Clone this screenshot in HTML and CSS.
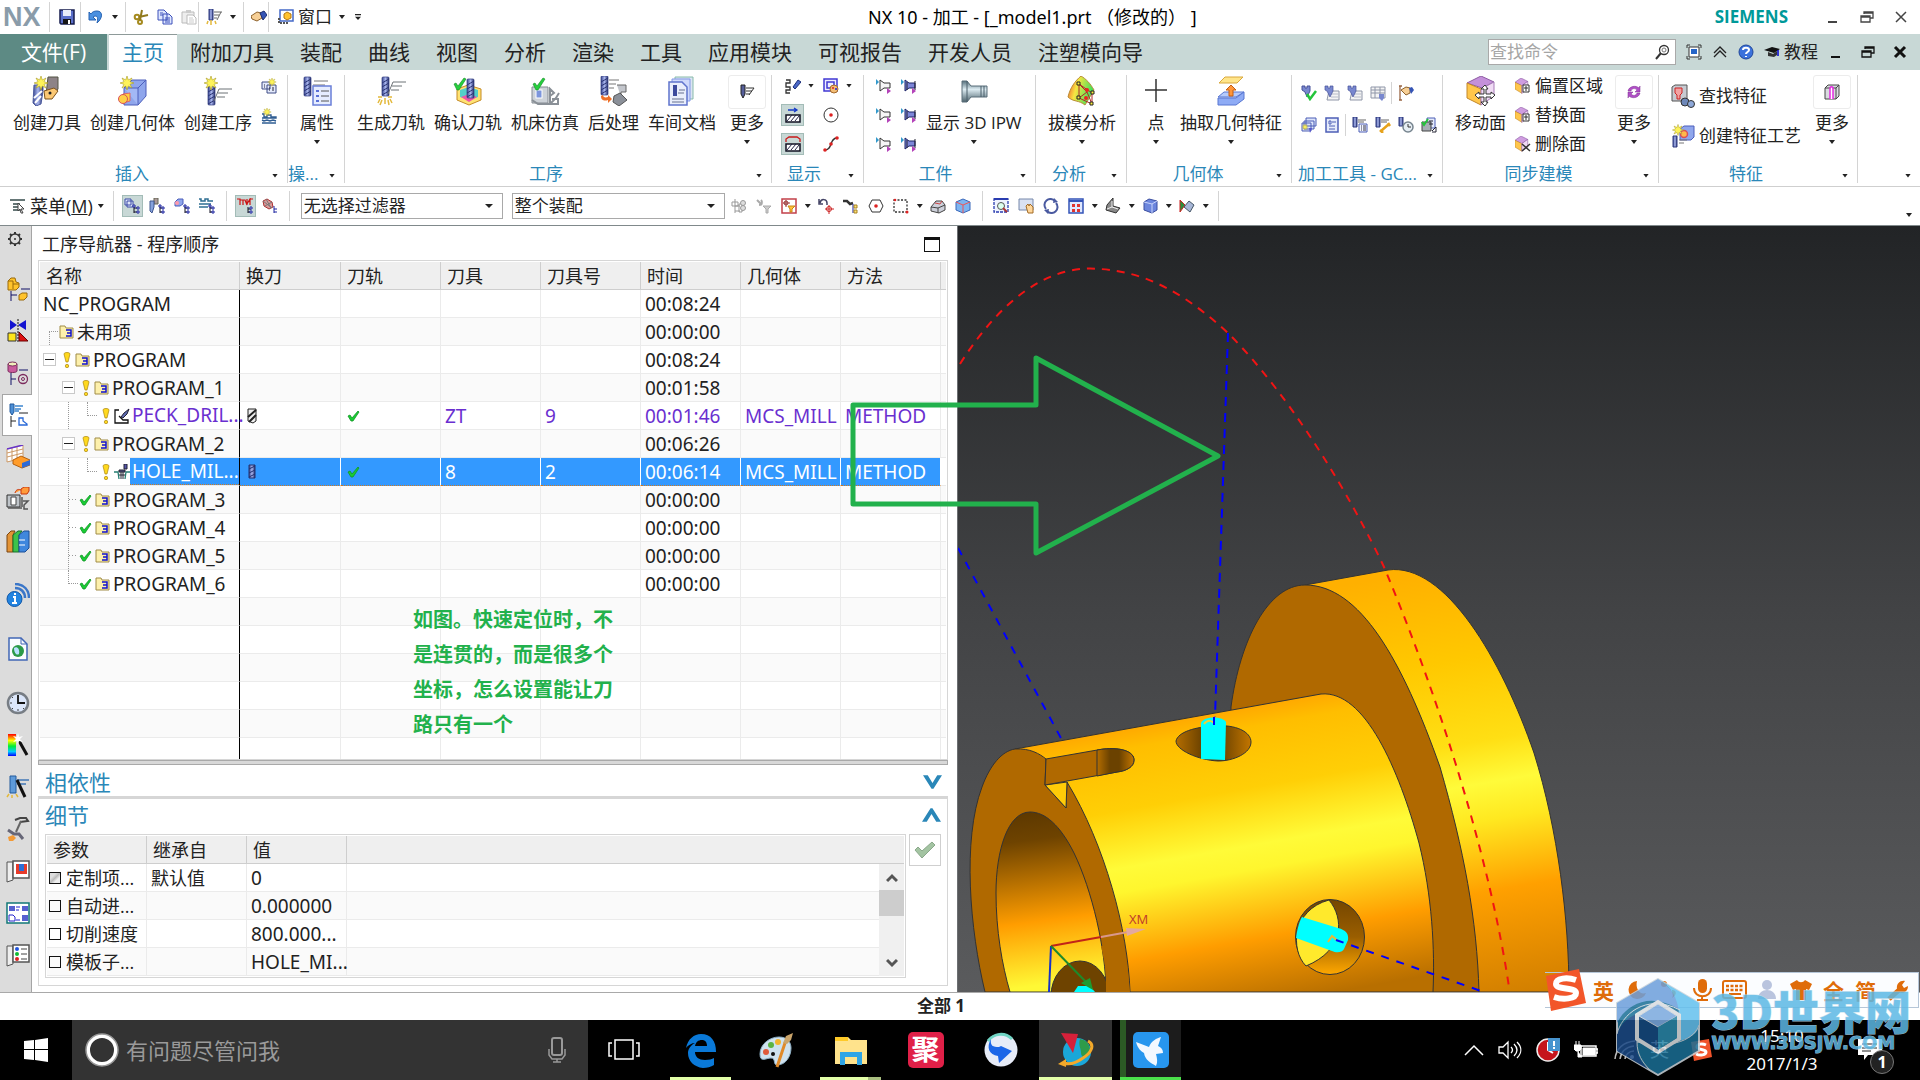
FILE: index.html
```html
<!DOCTYPE html>
<html lang="zh-CN">
<head>
    <meta charset="UTF-8">
    <meta name="viewport" content="width=device-width, initial-scale=1.0">
    <title>NX 10 - 加工</title>
    <link rel="stylesheet" href="styles.css">
</head>
<body>
    <!-- icon sprites -->
    <svg class="sprites" aria-hidden="true">
        <defs>
            <linearGradient id="gMill"><stop offset="0" stop-color="#3a478f"/><stop offset=".5" stop-color="#a9b6ee"/><stop offset="1" stop-color="#27306e"/></linearGradient>
            <linearGradient id="gSteel" x2="0" y2="1"><stop offset="0" stop-color="#56717d"/><stop offset=".4" stop-color="#dcebf1"/><stop offset="1" stop-color="#4c626c"/></linearGradient>
            <linearGradient id="gRain" x2="1" y2=".3"><stop offset="0" stop-color="#f0442c"/><stop offset=".4" stop-color="#f7e642"/><stop offset="1" stop-color="#3fe05a"/></linearGradient>
            <linearGradient id="gHue" x2="0" y2="1"><stop offset="0" stop-color="#f00"/><stop offset=".3" stop-color="#ff0"/><stop offset=".55" stop-color="#0e3"/><stop offset=".8" stop-color="#0cf"/><stop offset="1" stop-color="#00f"/></linearGradient>
            <g id="mill"><rect x="1" y="0" width="7" height="19" rx="1" fill="url(#gMill)" stroke="#2e3a80" stroke-width=".7"/><path d="M1 6l7-4M1 10l7-4M1 14l7-4M1 18l7-4" stroke="#2a3474"/></g>
            <path id="star" d="M0-7l1.300 4L5-5 3-1.300 7 0 3 1.300 5 5 1.300 3 0 7-1.300 3-5 5-3 1.300-7 0-3-1.300-5-5-1.300-3z" fill="#fdf35a" stroke="#a99a26" stroke-width=".6"/>
            <path id="tick" d="M0 4l2-1 2 3 6-8 2 1-7 11-2 0z" fill="#25cf3c" stroke="#128a25" stroke-width=".6"/>
            <path id="lines" d="M0 1h13M-1 5H9M-2 9H6M0 1l-5 12" stroke="#6d7276" fill="none"/>
            <g id="pcube"><path d="M0 5l7-5 8 4-7 5z" fill="#cf9de0" stroke="#8d5ba3" stroke-width=".7"/><path d="M0 5l8 4v9l-8-5z" fill="#ffc64b" stroke="#c2872a" stroke-width=".7"/><path d="M8 9l7-5v9l-7 5z" fill="#f0d9f5" stroke="#8d5ba3" stroke-width=".7"/></g>
        </defs>
        <symbol id="b-tool" viewBox="0 0 30 30"><path d="M16 1h10v12l-6 8-6-2z" fill="#8d8387" stroke="#554"/><path d="M12 15l10-3 4 3-6 8h-7z" fill="#fbc874" stroke="#7b521d"/><circle cx="18" cy="17" r="1.500" fill="#222"/><path d="M2 9h9v6l-2 13-5 2-3-3z" fill="url(#gMill)" stroke="#4c5b9d"/><path d="M2 22l8-7M3 27l6-7" stroke="#fff" stroke-width="2"/><use href="#star" x="9" y="7"/></symbol>
        <symbol id="b-geom" viewBox="0 0 30 30"><path d="M6 12l8-8h14v16l-8 9H6z" fill="#8fa6ec" stroke="#4c5fbb"/><path d="M6 12h14v17M20 12l8-8" fill="#a3b8f5" stroke="#4c5fbb"/><path d="M5 18l7-1v8l-7 2z" fill="#ffce3c" stroke="#d66"/><circle cx="5" cy="23" r="4.500" fill="#ffcf48" stroke="#d8505a"/><use href="#star" x="9" y="7"/></symbol>
        <symbol id="b-op" viewBox="0 0 30 30"><use href="#mill" x="4" y="10"/><use href="#lines" x="16" y="12"/><use href="#star" x="8" y="7"/></symbol>
        <symbol id="b-prop" viewBox="0 0 30 30"><use href="#mill" x="1" y="1"/><path d="M12 5h14M11 9h12" stroke="#777"/><rect x="11" y="10" width="18" height="19" fill="#e6edff" stroke="#6a7fd8" stroke-width="1.500"/><path d="M14 14h3v2h-3zM14 19h3v2h-3zM14 24h3v2h-3z" fill="#5a70d6"/><path d="M19 15h8M19 20h8M19 25h8" stroke="#555"/></symbol>
        <symbol id="b-gen" viewBox="0 0 30 30"><use href="#mill" x="5" y="1"/><use href="#lines" x="17" y="5"/><path d="M9 22v6M4 23l-2 4M14 23l2 4M2 21h4M12 21h4M6 24l-2 5M12 24l1 5" stroke="#e3b93c" stroke-width="1.500"/></symbol>
        <symbol id="b-verify" viewBox="0 0 30 30"><path d="M4 13l11-4 13 4v11l-12 5-12-5z" fill="#ffe373" stroke="#c58b26"/><path d="M7 14l9-3 9 3v7l-9 3-9-3z" fill="#53d0c9"/><path d="M8 21l8 5 8-5-8-3z" fill="#ee55a8"/><use href="#mill" x="13" y="3"/><use href="#tick" x="1" y="4"/></symbol>
        <symbol id="b-sim" viewBox="0 0 30 30"><path d="M2 11h16v16H2z" fill="#cdd2d8" stroke="#848b92"/><rect x="6" y="14" width="6" height="8" fill="#7c95dc" stroke="#fff"/><path d="M2 24l6 4h12V13l4 4-4 3M21 27l5-5 3-5M22 23h6v5h-8" fill="none" stroke="#8a9097" stroke-width="2"/><use href="#tick" x="3" y="4"/></symbol>
        <symbol id="b-post" viewBox="0 0 30 30"><use href="#mill" x="1" y="0"/><path d="M10 4h10M10 8h7M10 12h5" stroke="#777"/><path d="M18 9h9v7h-5v5" fill="#c3c6cc" stroke="#666"/><path d="M15 20l6-3 7 7-8 6-6-4z" fill="#8b9099" stroke="#555"/><path d="M2 20c0 5 4 5 7 4v3l4-4-4-4v2c-3 1-5 0-5-2z" fill="#ef7128"/></symbol>
        <symbol id="b-doc" viewBox="0 0 30 30"><path d="M8 1h18v22H8z" fill="#dbe4f3" stroke="#8ba"/><path d="M5 3h18v22H5z" fill="#cfd9fb" stroke="#8398e6"/><path d="M2 6h13l5 5v18H2z" fill="#e9eefb" stroke="#5f74cd" stroke-width="1.500"/><path d="M8 9v11" stroke="#3c4a9c" stroke-width="4"/><path d="M12 14h6M11 17h6M5 23h12M5 26h12" stroke="#67708f"/></symbol>
        <symbol id="b-ipw" viewBox="0 0 30 30"><path d="M3 5h5l4 5h16v11H12l-4 5H3z" fill="url(#gSteel)" stroke="#5b6f7a"/><path d="M22 10v11M25 10v11M8 5v21" stroke="#4b5f6a"/></symbol>
        <symbol id="b-draft" viewBox="0 0 30 30"><path d="M14 0c5 3 9 7 13 14l-9 15C12 24 6 26 1 21 3 12 8 5 14 0z" fill="url(#gRain)" stroke="#ba8d36"/><path d="M12 8v14l13 6V17zM12 8l8 8-8 6M20 16l5 12" fill="none" stroke="#b12828"/><path d="M10 6h3v3h-3zM10 20h3v3h-3zM24 15h3v3h-3zM23 26h3v3h-3z" fill="#ffee3a" stroke="#222"/><circle cx="20" cy="14" r="2" fill="#e22"/><circle cx="19" cy="22" r="2" fill="#e22"/></symbol>
        <symbol id="b-point" viewBox="0 0 30 30"><path d="M15 3v23M4 14h22" stroke="#333" stroke-width="1.500"/></symbol>
        <symbol id="b-extract" viewBox="0 0 30 30"><path d="M3 7l6-6h18l-6 6z" fill="#ffe58a" stroke="#d9a83d"/><path d="M2 21l6-5h20l-8 5z" fill="#b6cbfb" stroke="#5877d2"/><path d="M2 22h18l8-6v7l-8 6H2z" fill="#8eabf5" stroke="#5877d2"/><path d="M13 20v-6h-3l5-5 5 5h-3v6z" fill="#ff9538" stroke="#c45e12"/></symbol>
        <symbol id="b-move" viewBox="0 0 30 30"><path d="M1 7l14-7 13 6-12 6z" fill="#c490da" stroke="#8d5ba3"/><path d="M1 7l14 6v16L1 22z" fill="#ffc64b" stroke="#c2872a"/><path d="M15 13l13-7v14l-13 9z" fill="#f0dcf4" stroke="#a77bb8"/><path d="M19 9l3 4h-2v5h5v-2l4 3-4 4v-2h-5v5h2l-3 4-4-4h3v-5h-5v2l-4-4 4-3v2h5v-5h-3z" fill="#fff" stroke="#333"/></symbol>
        <symbol id="i-save" viewBox="0 0 16 16"><path d="M1 1h14v14H2l-1-1z" fill="#5a6fc9" stroke="#161d4d" stroke-width="1.500"/><path d="M4 1h8v6H4z" fill="#e8ecf8"/><path d="M4 10h8v5H4z" fill="#151515"/><path d="M9 11h2v4H9z" fill="#fff"/></symbol>
        <symbol id="i-undo" viewBox="0 0 16 16"><path d="M1 3v8h7L5 8c3-2 6-1 4 6 6-5 6-12 0-12-3 0-5 1-6 3z" fill="#4a90e0" stroke="#2763b3"/></symbol>
        <symbol id="i-cut" viewBox="0 0 16 16"><circle cx="4" cy="8" r="2.300" fill="none" stroke="#a58a1f" stroke-width="2"/><circle cx="7" cy="13" r="2" fill="none" stroke="#a58a1f" stroke-width="2"/><path d="M6 8l9-2M7 11l2-10" stroke="#917a1d" stroke-width="2"/></symbol>
        <symbol id="i-copy" viewBox="0 0 16 16"><path d="M1 1h6l3 3v7H1zM6 5h6l3 3v7H6z" fill="#dde5ff" stroke="#3c50ba"/><path d="M8 9h5M8 11h5M8 13h5M3 4h3M3 6h3" stroke="#3c50ba"/></symbol>
        <symbol id="i-paste" viewBox="0 0 16 16"><path d="M1 3h12v11H1z" fill="#eee" stroke="#bbb"/><path d="M5 1h5v3H5z" fill="#ccc"/><path d="M6 6h6l3 3v6H6z" fill="#fff" stroke="#bbb"/><path d="M8 9h4M8 11h5M8 13h5" stroke="#ccc"/></symbol>
        <symbol id="i-op" viewBox="0 0 16 16"><path d="M3 0h4v11H3z" fill="url(#gMill)" stroke="#2e3a80"/><path d="M8 3h8M8 6h5M8 9h3M15 3l-4 8" stroke="#666"/><path d="M5 11v5M2 12l-1 3M9 12l1 3" stroke="#e3b93c" stroke-width="1.500"/></symbol>
        <symbol id="i-opdark" viewBox="0 0 16 16"><path d="M2 1h4v9l-2 4-2-4z" fill="#555e9a" stroke="#222"/><path d="M7 4h8M7 7h6M7 10h4M15 4l-5 7" stroke="#333" fill="none"/></symbol>
        <symbol id="i-hand" viewBox="0 0 16 16"><path d="M0 7l6-4 4 1 1 5-5 3-5-2z" fill="#f7cf95" stroke="#8d612c"/><path d="M9 4l4-2 3 4-4 5z" fill="#3554b5" stroke="#1d2e70"/></symbol>
        <symbol id="i-flag" viewBox="0 0 16 16"><path d="M1 1h3M2 1v14M1 15h3" stroke="#964" stroke-width="1.300"/><path d="M3 5l5-3 4 1v5l-4 2z" fill="#f7cf95" stroke="#8d612c"/><path d="M11 3l3-1 2 3-3 4z" fill="#3554b5"/></symbol>
        <symbol id="i-win" viewBox="0 0 16 16"><path d="M2 1h13v11H2z" fill="#fff" stroke="#4469c8" stroke-width="1.500"/><path d="M6 5l3-2 4 2v4l-4 2-3-2z" fill="#ffc22e" stroke="#b37712"/><path d="M1 9v5h9" stroke="#555" fill="none" stroke-width="2" stroke-dasharray="2 1"/></symbol>
        <symbol id="i-search" viewBox="0 0 16 16"><circle cx="10" cy="6" r="4.500" fill="none" stroke="#333" stroke-width="1.300"/><circle cx="10" cy="6" r="2" fill="none" stroke="#777"/><path d="M7 9l-5 6" stroke="#333" stroke-width="2"/></symbol>
        <symbol id="i-full" viewBox="0 0 16 16"><path d="M1 4V1h3M12 1h3v3M15 12v3h-3M4 15H1v-3" fill="none" stroke="#333"/><path d="M3 3h10v10H3z" fill="#fff" stroke="#333"/><path d="M5 5h6v5H5z" fill="#2565c8"/></symbol>
        <symbol id="i-up2" viewBox="0 0 16 16"><path d="M2 9l6-6 6 6M2 13l6-6 6 6" fill="none" stroke="#222" stroke-width="1.300"/></symbol>
        <symbol id="i-help" viewBox="0 0 16 16"><circle cx="8" cy="8" r="7" fill="#3c72dc" stroke="#1f4699"/><path d="M5 6c0-3 6-3 6 0 0 2-3 2-3 4M8 12v1" fill="none" stroke="#fff" stroke-width="2"/></symbol>
        <symbol id="i-hat" viewBox="0 0 16 16"><path d="M0 6l8-3 8 2-6 4z" fill="#111"/><path d="M4 8v4l6 1 3-2V7l-4 3z" fill="#333"/><path d="M14 6v6" stroke="#00c" stroke-width="1.500"/></symbol>
        <symbol id="i-min" viewBox="0 0 16 16"><path d="M3 13h9" stroke="currentColor" stroke-width="2"/></symbol>
        <symbol id="i-rest" viewBox="0 0 16 16"><path d="M5 5V3h9v6h-3M2 7h9v6H2zM5 4h9M2 8h9" fill="none" stroke="currentColor" stroke-width="1.300"/></symbol>
        <symbol id="i-x" viewBox="0 0 16 16"><path d="M3 3l10 10M13 3L3 13" stroke="currentColor" stroke-width="var(--w,1.500)"/></symbol>
        <symbol id="i-newgrp" viewBox="0 0 16 16"><path d="M1 4h8v7H1zM6 7h9v8H6z" fill="#e3e9fb" stroke="#3f4c86"/><path d="M8 10h1M11 10h2M8 12h1M11 12h2M3 7h1M3 9h1" stroke="#223"/><use href="#star" transform="translate(11 4) scale(.6)"/></symbol>
        <symbol id="i-newmeth" viewBox="0 0 16 16"><path d="M1 6h2v3h3V7h4v2h5v1H1M1 12l2 1 3-1 3 1 3-1 3 1M1 15h14" fill="none" stroke="#2f5d93" stroke-width="1.400"/><use href="#star" transform="translate(6 4) scale(.6)"/></symbol>
        <symbol id="i-path" viewBox="0 0 16 16"><path d="M1 2h4v3H1v4h4v3H1v3h4" fill="none" stroke="#333" stroke-width="1.300"/><path d="M8 9l5-7 3 2-6 7z" fill="#4a68c8" stroke="#1d2f7a"/></symbol>
        <symbol id="i-color" viewBox="0 0 16 16"><path d="M1 1h13v12H1zM4 4h7v6H4z" fill="#eef" stroke="#4239d4" stroke-width="1.500"/><circle cx="11" cy="11" r="4" fill="#f2bd75" stroke="#a66a2c"/><circle cx="10" cy="10" r="1" fill="#d22"/><circle cx="13" cy="11" r="1" fill="#22c"/></symbol>
        <symbol id="i-hatch" viewBox="0 0 16 16"><path d="M1 8h14v7H1z" fill="#fff" stroke="#112" stroke-width="1.500"/><path d="M2 14l5-6M6 14l5-6M10 14l4-5" stroke="#224"/><path d="M3 3h9M9 1l3 2-3 2" stroke="#1538c8" fill="none" stroke-width="1.300"/></symbol>
        <symbol id="i-hatchr" viewBox="0 0 16 16"><path d="M1 8h14v7H1z" fill="#fff" stroke="#112" stroke-width="1.500"/><path d="M2 14l5-6M6 14l5-6M10 14l4-5" stroke="#224"/><path d="M1 6V3l3-2h8l3 2v3" stroke="#c81a1a" fill="none" stroke-width="1.300"/></symbol>
        <symbol id="i-circ" viewBox="0 0 16 16"><circle cx="8" cy="8" r="7" fill="none" stroke="#333"/><circle cx="8" cy="8" r="1.800" fill="#d22"/></symbol>
        <symbol id="i-spline" viewBox="0 0 16 16"><path d="M2 14c8 0 4-12 12-12" fill="none" stroke="#333" stroke-width="1.300"/><circle cx="2" cy="14" r="1.800" fill="#d22"/><circle cx="8" cy="8" r="1.800" fill="#d22"/><circle cx="14" cy="2" r="1.800" fill="#d22"/></symbol>
        <symbol id="i-wp" viewBox="0 0 16 16"><path d="M4 2l4 3h6v5H8l-4 3z" fill="#f6f6f6" stroke="#333"/><path d="M0 1l3 3-3 3z" fill="#39c"/><path d="M11 10l4 3-4 3z" fill="#b443b9"/></symbol>
        <symbol id="i-wpb" viewBox="0 0 16 16"><path d="M4 2l4 3h6v5H8l-4 3z" fill="#7d86d8" stroke="#1d2468"/><path d="M6 4v8M14 3v9" stroke="#223"/><path d="M0 1l3 3-3 3z" fill="#39c"/><path d="M11 10l4 3-4 3z" fill="#b443b9"/></symbol>
        <symbol id="i-tcheck" viewBox="0 0 16 16"><path d="M1 1h3v2h2V1h3v5l-3 6-2-5-3-2z" fill="#7887cf" stroke="#465199"/><path d="M6 9l3 5 6-8" fill="none" stroke="#24c43b" stroke-width="2.500"/></symbol>
        <symbol id="i-tdoc" viewBox="0 0 16 16"><path d="M5 6h10v9H3z" fill="#f4f4f4" stroke="#8f96a8"/><path d="M7 9h7M7 12h7" stroke="#b8bcc8"/><path d="M1 1h3v2h2V1h3v5l-3 6-3-6-2-1z" fill="#7887cf" stroke="#465199" stroke-width=".7"/></symbol>
        <symbol id="i-tgrid" viewBox="0 0 16 16"><path d="M1 2h14v11H1zM1 5h14M1 8h14M5 2v11M10 2v11" fill="#f4f4f4" stroke="#8f96a8"/><path d="M9 9h5v4l-2 3-3-3z" fill="#7887cf"/></symbol>
        <symbol id="i-stack" viewBox="0 0 16 16"><path d="M5 1h10v8H5zM3 4h10v8H3zM1 6h9v8H1z" fill="#dce4fa" stroke="#4d5fb6"/><path d="M8 11l1 5 2-5z" fill="#55c"/><use href="#star" transform="translate(4 10) scale(.45)"/></symbol>
        <symbol id="i-page" viewBox="0 0 16 16"><path d="M2 1h12v14H2z" fill="#e5ebfb" stroke="#4d5fb6" stroke-width="1.500"/><path d="M5 4h2v3H5zM8 5h4M5 9h6M5 12h6" stroke="#4d5fb6" fill="none"/></symbol>
        <symbol id="i-mlist" viewBox="0 0 16 16"><path d="M1 0h4v10H1z" fill="url(#gMill)" stroke="#2e3a80"/><path d="M6 3h8M6 5h6" stroke="#666"/><path d="M7 7h8v8H7z" fill="#f1f4ff" stroke="#4d5fb6"/><path d="M9 9h1M9 11h1M9 13h1M11 9h3M11 11h3M11 13h3" stroke="#334"/></symbol>
        <symbol id="i-mwr" viewBox="0 0 16 16"><path d="M1 0h4v10H1z" fill="url(#gMill)" stroke="#2e3a80"/><path d="M6 3h8M6 5h6" stroke="#666"/><path d="M6 14l8-7M13 6l2 3M5 13l3 3" stroke="#e6a21b" stroke-width="2.500"/></symbol>
        <symbol id="i-mclk" viewBox="0 0 16 16"><path d="M1 0h4v9H1z" fill="url(#gMill)" stroke="#2e3a80"/><circle cx="10" cy="10" r="5" fill="#e6eef4" stroke="#77858f" stroke-width="1.500"/><path d="M10 7v3h3" stroke="#333" fill="none"/></symbol>
        <symbol id="i-mach" viewBox="0 0 16 16"><path d="M6 1h8v10H6z" fill="#e5ebfb" stroke="#4d5fb6"/><path d="M1 5h9v9H1z" fill="#a7adb5" stroke="#444"/><path d="M8 4h4M8 7h4M11 14l4-4v5h-4" stroke="#223" fill="none"/><path d="M1 5l2 3 4-6" stroke="#24c43b" stroke-width="2" fill="none"/></symbol>
        <symbol id="i-face" viewBox="0 0 16 16"><use href="#pcube" transform="scale(.85)"/><path d="M8 7h6v7H8z" fill="#fff" stroke="#333"/><path d="M9 10h4M11 8v5" stroke="#333"/></symbol>
        <symbol id="i-facex" viewBox="0 0 16 16"><use href="#pcube" transform="scale(.85)"/><path d="M7 8l8 7M15 8l-8 7" stroke="#333" stroke-width="1.500"/></symbol>
        <symbol id="i-cycle" viewBox="0 0 16 16"><path d="M2 7c1-5 8-6 11-3l1-2v6H9l2-2C9 4 6 4 5 7zM14 9c-1 5-8 6-11 3l-1 2V8h5l-2 2c2 2 5 2 6-1z" fill="#b04fc6" stroke="#7d2f92" stroke-width=".5"/></symbol>
        <symbol id="i-slot" viewBox="0 0 16 16"><path d="M1 4l3-3h11v11l-3 3H1z" fill="#d9dbe0" stroke="#444"/><path d="M1 4h11v11M12 4l3-3" fill="none" stroke="#444"/><path d="M6 15V5c0-3 3-3 3 0v10" fill="#fff" stroke="#e32de0" stroke-width="1.500"/></symbol>
        <symbol id="s-find" viewBox="0 0 24 24"><path d="M1 3l3-2h12v13l-3 3H1z" fill="#c7cad1" stroke="#555"/><path d="M4 4h7v5l-2 2v4H6v-4L4 9z" fill="#f3a2a2" stroke="#c22"/><circle cx="14" cy="18" r="4" fill="#6d87b8" stroke="#333"/><circle cx="20" cy="20" r="3.500" fill="#8ea8d8" stroke="#333"/></symbol>
        <symbol id="s-make" viewBox="0 0 24 24"><path d="M9 5l4-3h10v11l-3 3H9z" fill="#8fa6ec" stroke="#4c5fbb"/><circle cx="13" cy="10" r="3.500" fill="#ffb84a" stroke="#d8505a" stroke-width="1.500"/><path d="M2 12h4v11H2z" fill="url(#gMill)" stroke="#2e3a80"/><path d="M8 16h8M8 19h5" stroke="#777"/><use href="#star" transform="translate(7 6) scale(.8)"/></symbol>
        <symbol id="i-menu" viewBox="0 0 16 16"><path d="M0 2h15M3 6h7M3 9h6M3 12h7" stroke="#677" stroke-width="2"/><path d="M8 5l6 6-3 0 2 4-2 0-1-4-2 2z" fill="#fff" stroke="#444"/></symbol>
        <symbol id="i-vtree" viewBox="0 0 16 16"><path d="M1 1h6v6H1zM3 3h6v6H3z" fill="#dfe6fa" stroke="#3b4aa6"/><path d="M10 8v7M10 10h4M10 14h4" stroke="#112" fill="none"/><path d="M13 9h2v2h-2zM13 13h2v2h-2zM9 7h2v2H9z" fill="#fff" stroke="#1b22a0"/></symbol>
        <symbol id="i-vtool" viewBox="0 0 16 16"><path d="M5 0h4v6H5z" fill="#a99" stroke="#665"/><path d="M1 3h4v6l-2 6-2-2z" fill="#86a2dd" stroke="#3f568f"/><path d="M11 8v7M11 10h3M11 14h3" stroke="#112"/><path d="M13 9h2v2h-2zM13 13h2v2h-2zM10 7h2v2h-2z" fill="#fff" stroke="#1b22a0"/></symbol>
        <symbol id="i-vgeo" viewBox="0 0 16 16"><path d="M1 4l3-3h5v5L6 8H1z" fill="#8fa6ec" stroke="#4c5fbb"/><circle cx="3" cy="5" r="2" fill="#f9a"/><path d="M11 8v7M11 10h3M11 14h3" stroke="#112"/><path d="M13 9h2v2h-2zM13 13h2v2h-2zM10 7h2v2h-2z" fill="#fff" stroke="#1b22a0"/></symbol>
        <symbol id="i-vmeth" viewBox="0 0 16 16"><path d="M0 1h2v2h4V1h3v2h5M0 6h12M0 9h9" fill="none" stroke="#2f6f93" stroke-width="1.500"/><path d="M11 8v7M11 10h3M11 14h3" stroke="#112"/><path d="M13 9h2v2h-2zM13 13h2v2h-2zM10 7h2v2h-2z" fill="#fff" stroke="#1b22a0"/></symbol>
        <symbol id="i-wave" viewBox="0 0 16 16"><path d="M0 1h3v6M3 2h3v5M6 2h2l2 5V1M10 6l3-5v6M13 1h3" fill="none" stroke="#c11" stroke-width="1.200"/><path d="M11 9v6M11 11h3M11 14h3" stroke="#112"/><path d="M13 9h2v2h-2zM13 13h2v2h-2z" fill="#fff" stroke="#1b22a0"/></symbol>
        <symbol id="i-blob" viewBox="0 0 16 16"><path d="M1 3l4-2 5 3 1 5-4 2-5-3z" fill="#d99" stroke="#a33"/><path d="M1 3l9 7M4 1l5 9M3 8l7-4" stroke="#777"/><path d="M12 8v7M12 11h3M12 14h3" stroke="#1b22a0"/></symbol>
        <symbol id="i-asm" viewBox="0 0 16 16"><path d="M1 4h6v4H1zM4 1v14M4 8h5M4 13h5M8 6h3v8H8z" fill="none" stroke="#999"/><circle cx="12" cy="5" r="2.500" fill="#ddd" stroke="#999"/><circle cx="12" cy="10" r="2.500" fill="#ddd" stroke="#999"/></symbol>
        <symbol id="i-funnelg" viewBox="0 0 16 16"><path d="M1 2l5 5M5 2c2 2 1 5-2 5" stroke="#aaa" stroke-width="2" fill="none"/><path d="M7 8h8l-3 3v4h-2v-4z" fill="#ccc" stroke="#aaa"/></symbol>
        <symbol id="i-redf" viewBox="0 0 16 16"><path d="M1 1h14v14H1z" fill="#fff" stroke="#c2404a" stroke-width="1.500"/><path d="M5 2v7M2 5h7" stroke="#933"/><circle cx="5" cy="5" r="2" fill="none" stroke="#933"/><path d="M7 8h7l-3 3v3H9v-3z" fill="#ffc23a" stroke="#c88413"/></symbol>
        <symbol id="i-undot" viewBox="0 0 16 16"><path d="M2 5c1-5 7-4 7 0v2M1 1v5h4" fill="none" stroke="#446" stroke-width="1.500"/><path d="M11 7v9M7 11h9" stroke="#c22"/><circle cx="11" cy="11" r="2.500" fill="none" stroke="#c22"/></symbol>
        <symbol id="i-chain" viewBox="0 0 16 16"><path d="M0 3h4l3 3 3-1" stroke="#333" stroke-width="2.500" fill="none"/><path d="M10 6v9" stroke="#1b22a0"/><path d="M11 7h3v3h-3zM11 12h3v3h-3z" fill="#ffe27a" stroke="#a78320"/></symbol>
        <symbol id="i-hexp" viewBox="0 0 16 16"><path d="M4 2h8l3 6-3 6H4L1 8z" fill="none" stroke="#333"/><circle cx="8" cy="8" r="1.800" fill="#d22"/></symbol>
        <symbol id="i-rectp" viewBox="0 0 16 16"><path d="M1 2h13v12H1z" fill="none" stroke="#333" stroke-dasharray="2 1.500" stroke-width="1.300"/><circle cx="14" cy="14" r="1.500" fill="#d22"/><circle cx="2" cy="2" r="1.300" fill="#d22"/></symbol>
        <symbol id="i-shell" viewBox="0 0 16 16"><path d="M1 9l5-6h6l3 4v5l-6 3-8-2z" fill="#cdd0da" stroke="#444"/><path d="M1 9l7 1 7-3M8 10v5" stroke="#444" fill="none"/><path d="M5 5l5 1 2-3" stroke="#c44" fill="none"/></symbol>
        <symbol id="i-bcube" viewBox="0 0 16 16"><path d="M1 4l7-3 7 3v8l-7 3-7-3z" fill="#7db4f0" stroke="#3a68ba"/><path d="M1 4l7 3 7-3M8 7v8" stroke="#e55" fill="none"/></symbol>
        <symbol id="i-zoomw" viewBox="0 0 16 16"><path d="M1 1h14v13H1z" fill="#eef3ff" stroke="#2a3cb0" stroke-dasharray="3 1" stroke-width="1.300"/><path d="M1 1h14" stroke="#2a3cb0" stroke-width="2"/><circle cx="8" cy="8" r="3.500" fill="#dfe" stroke="#555"/><path d="M10 10l4 4" stroke="#a33" stroke-width="2"/></symbol>
        <symbol id="i-pan" viewBox="0 0 16 16"><path d="M1 1h14v11H1z" fill="#d9e1f2" stroke="#78a"/><path d="M8 8l2-2 1 2 1-2 3 3v6h-5z" fill="#ffd79b" stroke="#a26b25"/></symbol>
        <symbol id="i-rot" viewBox="0 0 16 16"><path d="M3 11A6 6 0 0 1 12 3M13 5a6 6 0 0 1-9 8" fill="none" stroke="#4a5aa0" stroke-width="2"/><path d="M11 0l4 4-5 1zM5 16l-4-4 5-1z" fill="#4a5aa0"/></symbol>
        <symbol id="i-fit" viewBox="0 0 16 16"><path d="M1 1h14v14H1z" fill="#dfe8ff" stroke="#3454b8" stroke-width="1.500"/><path d="M1 3h14" stroke="#3454b8" stroke-width="2"/><path d="M4 6h3v3H4zM9 6h3v3H9zM4 11h3v3H4zM9 11h3v3H9z" fill="#e0342d"/></symbol>
        <symbol id="i-corner" viewBox="0 0 16 16"><path d="M8 0v8l7 2-4 5-10-3 1-5z" fill="#888" stroke="#333"/><path d="M7 3v6l-5 2M7 9l6 2" stroke="#eee" fill="none"/></symbol>
        <symbol id="i-shade" viewBox="0 0 16 16"><path d="M2 4l5-3 8 2v9l-5 3-8-3z" fill="#6c86dd" stroke="#3b4ea0"/><path d="M2 4l8 2 5-3M10 6v9" stroke="#c9d4fa" fill="none"/></symbol>
        <symbol id="i-clip" viewBox="0 0 16 16"><path d="M1 2l5 5-5 7z" fill="#2a8f3a" stroke="#c22"/><path d="M5 9l5-6 5 4-4 7z" fill="#a7b6d6" stroke="#456"/></symbol>
        <symbol id="i-excl" viewBox="0 0 8 16"><path d="M1 2c0-2 6-2 6 0L5 10H3z" fill="#ffd91f" stroke="#a98512" stroke-width=".7"/><circle cx="4" cy="14" r="1.700" fill="#ffd91f" stroke="#a98512" stroke-width=".7"/></symbol>
        <symbol id="i-fold" viewBox="0 0 15 14"><path d="M1 1h5l1 2h7v10H1z" fill="#fdf0ac" stroke="#a08c46"/><path d="M7 5h5v6H7M8 8h4" fill="none" stroke="#11c" stroke-width="1.500"/></symbol>
        <symbol id="i-peck" viewBox="0 0 16 16"><path d="M5 2H1v13h13v-3H9L5 8" fill="none" stroke="#111" stroke-width="1.300"/><path d="M7 9l3-4 5-4-2 5-4 4z" fill="#5d6ab0" stroke="#223"/></symbol>
        <symbol id="i-hole" viewBox="0 0 16 16"><path d="M0 8h4l1 7M16 8h-4l-1 7" fill="none" stroke="#257d72" stroke-width="1.300"/><path d="M10 0h3v5h-3z" fill="#55a" stroke="#223"/><path d="M5 6h6v2H5zM7 8v7M9 8v7M5 11h6" fill="#558" stroke="#223"/></symbol>
        <symbol id="i-drill" viewBox="0 0 10 16"><path d="M1 1h8v12l-3 2-5-2z" fill="#eee" stroke="#222"/><path d="M1 9l8-7M2 14l7-7" stroke="#222" stroke-width="2"/></symbol>
        <symbol id="i-emill" viewBox="0 0 10 16"><path d="M2 1h6v13H2z" fill="url(#gMill)" stroke="#22306e"/><path d="M2 5l6-3M2 9l6-3M2 13l6-3" stroke="#22306e"/></symbol>
        <symbol id="i-tick" viewBox="0 0 13 12"><path d="M1 6l2-1 2 3 6-7 1 1-6 9-2 0z" fill="#18cc33" stroke="#119626" stroke-width=".8"/></symbol>
        <!-- resource bar -->
        <symbol id="r-gear" viewBox="0 0 24 24"><circle cx="12" cy="12" r="5" fill="none" stroke="#333" stroke-width="1.300"/><circle cx="12" cy="12" r="1" fill="#333"/><path d="M12 5v2M12 17v2M5 12h2M17 12h2M7 7l1.500 1.500M15.500 15.500L17 17M17 7l-1.500 1.500M8.500 15.500L7 17" stroke="#333" stroke-width="2"/></symbol>
        <symbol id="r-asm" viewBox="0 0 24 24"><path d="M2 4l3-3h4l1 4 3 1v4l-3 3H2z" fill="#ffc32b" stroke="#9a6b0c"/><path d="M2 4h5v8M7 7h6" stroke="#9a6b0c" fill="none"/><path d="M15 12h9M5 14v10M5 18h6" stroke="#116" fill="none"/><path d="M13 18l3-2h5v4l-3 3h-5z" fill="#ffc32b" stroke="#9a6b0c"/></symbol>
        <symbol id="r-cons" viewBox="0 0 24 24"><path d="M4 1l7 5-7 5zM20 1l-8 5 8 5z" fill="#1313d0"/><path d="M12 0v24" stroke="#111" stroke-dasharray="2 1"/><path d="M2 14h8v8H2z" fill="#ffe51c" stroke="#333"/><path d="M13 13l9 9h-9z" fill="#d11" stroke="#600"/></symbol>
        <symbol id="r-part" viewBox="0 0 24 24"><path d="M2 3v7c0 2 9 2 9 0V3" fill="#c95b9d" stroke="#7b2a5c"/><ellipse cx="6.500" cy="3" rx="4.500" ry="2" fill="#eeb" stroke="#7b2a5c"/><path d="M13 9h9M5 12v12M5 18h5" stroke="#116"/><circle cx="17" cy="18" r="4.500" fill="none" stroke="#7b2a5c" stroke-width="1.300"/><circle cx="17" cy="18" r="1.500" fill="none" stroke="#7b2a5c"/></symbol>
        <symbol id="r-op" viewBox="0 0 24 24"><path d="M4 1h4v8l-2 3-2-3z" fill="#4c8fd6" stroke="#235a9d"/><path d="M9 3h8M9 6h6M9 8h4" stroke="#3e86cf" stroke-width="1.300"/><path d="M13 10h9M5 13v11M5 18h5" stroke="#222"/><path d="M13 15h4v3l4 3v1h-8z" fill="#fff" stroke="#2a6ad8" stroke-width="1.300"/></symbol>
        <symbol id="r-mt" viewBox="0 0 24 24"><path d="M1 4l16-4v13L1 17zM1 8l16-4M1 12l16-4M6 3v13M11 2v12" fill="#fff" stroke="#c96"/><path d="M1 4l16-4" stroke="#63c" stroke-width="1.500"/><path d="M7 15l8-4 9 4v5l-8 3-9-4z" fill="#ff9c2a" stroke="#b45f0c"/><path d="M16 18l8-3v5l-8 3z" fill="#2d6bd8"/></symbol>
        <symbol id="r-mach" viewBox="0 0 24 24"><path d="M1 8h13v12H1z" fill="#bfc4c9" stroke="#333"/><path d="M5 10h5v8H5z" fill="#fff" stroke="#444"/><path d="M17 14h5l-4 4v4h4M2 21h14M16 10v10" stroke="#555" fill="none" stroke-width="1.500"/><path d="M9 6c1-4 4-4 6-3M15 2l3-2h5v4l-2 3h-6z" fill="#ff9b3a" stroke="#c9340c"/></symbol>
        <symbol id="r-lib" viewBox="0 0 24 24"><path d="M1 6l4-4h4L7 6v17H1z" fill="#e39437" stroke="#7a4510"/><path d="M7 6l5-4h4l-3 4v17H7z" fill="#3cc24a" stroke="#17702a"/><path d="M13 6l5-4h5v17l-4 4h-6z" fill="#3f87dd" stroke="#1c4e96"/><path d="M13 11h6M13 16h6" stroke="#fff"/></symbol>
        <symbol id="r-info" viewBox="0 0 24 24"><circle cx="8.500" cy="16" r="7.500" fill="#2384e0" stroke="#0e56a8"/><path d="M8 11h2M7 14h2v6M6 20h5" stroke="#fff" stroke-width="2" fill="none"/><path d="M9 5c6 0 10 4 10 10M9 1c9 0 14 6 14 14" stroke="#3a76c8" stroke-width="2.500" fill="none"/></symbol>
        <symbol id="r-web" viewBox="0 0 24 24"><path d="M3 1h12l6 6v16H3z" fill="#fafcff" stroke="#4267b5" stroke-width="1.500"/><path d="M15 1v6h6" fill="none" stroke="#4267b5"/><circle cx="12" cy="14" r="6" fill="#2b9a48"/><path d="M8 11c3-2 6 1 5 6-3 2-5-2-5-6z" fill="#b8e1ff"/></symbol>
        <symbol id="r-clock" viewBox="0 0 24 24"><circle cx="12" cy="12" r="10" fill="#dbe6fa" stroke="#777d84" stroke-width="2.500"/><path d="M12 4v8h7" fill="none" stroke="#111" stroke-width="1.800"/><path d="M12 18v2M4 12h2M6 6l1 1M6 18l1-1M18 18l-1-1" stroke="#444"/></symbol>
        <symbol id="r-hue" viewBox="0 0 24 24"><path d="M2 1h8v22H2z" fill="url(#gHue)"/><path d="M12 6l9 16" stroke="#111" stroke-width="3"/><path d="M12 0l1 4 4-1-3 3 3 3-4-1-1 4-1-4-4 1 3-3-3-3 4 1z" fill="#fff"/></symbol>
        <symbol id="r-wand" viewBox="0 0 24 24"><path d="M4 1h6v17H4z" fill="#5e9ad9" stroke="#235a9d"/><path d="M11 5h12M11 9h9" stroke="#4177b5" stroke-width="1.500"/><path d="M3 19l-2 3M6 20v3M10 19l2 3" stroke="#e3b93c" stroke-width="1.500"/><path d="M11 5l8 17" stroke="#111" stroke-width="3"/></symbol>
        <symbol id="r-role" viewBox="0 0 24 24"><path d="M9 3l5-2h6l2 3-8 1" fill="none" stroke="#444" stroke-width="2"/><path d="M15 4l-5 11" stroke="#666" stroke-width="2"/><path d="M2 13l6 4h5l4 5" stroke="#667" stroke-width="3" fill="none"/><path d="M2 20l5-2 3 3-3 3H3z" fill="#f39a35"/></symbol>
        <symbol id="r-b1" viewBox="0 0 24 24"><path d="M1 3h6v18l-6 2z" fill="#eee" stroke="#555"/><path d="M7 2h16v17H7z" fill="#fff" stroke="#555" stroke-width="1.500"/><path d="M10 5h11v10H10z" fill="#2c6fd6"/><path d="M10 5h3v10h-3zM18 5h3v10h-3zM10 12h11v3H10z" fill="#e63b2b"/></symbol>
        <symbol id="r-b2" viewBox="0 0 24 24"><path d="M1 2h22v20H1z" fill="#fff" stroke="#177" stroke-width="1.500"/><path d="M3 5h6v5H3zM16 5h6v5h-6zM16 14h6v6h-6z" fill="#5560cf"/><path d="M10 6h4M10 9h3M10 19h4M3 14h4l2 2v4H3z" fill="none" stroke="#22c"/></symbol>
        <symbol id="r-b3" viewBox="0 0 24 24"><path d="M1 3h6v18l-6 2z" fill="#eee" stroke="#555"/><path d="M7 2h16v17H7z" fill="#fff" stroke="#555" stroke-width="1.500"/><circle cx="11" cy="6" r="2" fill="#25d"/><circle cx="11" cy="11" r="2" fill="#1b3"/><circle cx="11" cy="16" r="2" fill="#d22"/><path d="M15 6h6M15 11h6M15 16h6" stroke="#444"/></symbol>
    </svg>

    <header class="titlebar">
        <span class="nx-logo">NX</span>
        <i class="sep"></i>
        <button class="qa save" title="保存"><svg class="ic"><use href="#i-save"/></svg></button>
        <i class="sep"></i>
        <button class="qa" title="撤消"><svg class="ic"><use href="#i-undo"/></svg></button>
        <i class="arrow"></i>
        <i class="sep"></i>
        <button class="qa" title="剪切"><svg class="ic"><use href="#i-cut"/></svg></button>
        <button class="qa" title="复制"><svg class="ic"><use href="#i-copy"/></svg></button>
        <button class="qa" title="粘贴"><svg class="ic"><use href="#i-paste"/></svg></button>
        <i class="sep"></i>
        <button class="qa" title="工序"><svg class="ic"><use href="#i-op"/></svg></button>
        <i class="arrow"></i>
        <i class="sep"></i>
        <button class="qa" title="触控"><svg class="ic"><use href="#i-hand"/></svg></button>
        <i class="sep"></i>
        <button class="qa window-btn"><svg class="ic"><use href="#i-win"/></svg>窗口</button>
        <i class="arrow"></i>
        <i class="arrow bar"></i>
        <h1>NX 10 - 加工 - [_model1.prt （修改的） ]</h1>
        <span class="siemens">SIEMENS</span>
        <div class="winbtns">
            <button title="最小化"><svg class="ic"><use href="#i-min"/></svg></button>
            <button title="还原"><svg class="ic"><use href="#i-rest"/></svg></button>
            <button title="关闭"><svg class="ic"><use href="#i-x"/></svg></button>
        </div>
    </header>

    <nav class="tabs">
        <button class="file-tab">文件(F)</button>
        <a href="#" class="active">主页</a>
        <a href="#">附加刀具</a>
        <a href="#">装配</a>
        <a href="#">曲线</a>
        <a href="#">视图</a>
        <a href="#">分析</a>
        <a href="#">渲染</a>
        <a href="#">工具</a>
        <a href="#">应用模块</a>
        <a href="#">可视报告</a>
        <a href="#">开发人员</a>
        <a href="#">注塑模向导</a>
        <div class="tab-tools">
            <label class="find"><input type="text" placeholder="查找命令" aria-label="查找命令"><svg class="ic"><use href="#i-search"/></svg></label>
            <button title="全屏"><svg class="ic"><use href="#i-full"/></svg></button>
            <button title="折叠"><svg class="ic"><use href="#i-up2"/></svg></button>
            <button title="帮助"><svg class="ic"><use href="#i-help"/></svg></button>
            <button class="tutorial"><svg class="ic"><use href="#i-hat"/></svg>教程</button>
            <div class="winbtns heavy">
                <button title="最小化"><svg class="ic"><use href="#i-min"/></svg></button>
                <button title="还原"><svg class="ic"><use href="#i-rest"/></svg></button>
                <button title="关闭"><svg class="ic"><use href="#i-x"/></svg></button>
            </div>
        </div>
    </nav>

    <div class="ribbon">
        <section class="group g-insert">
            <div class="group-body">
                <button class="big"><svg><use href="#b-tool"/></svg>创建刀具</button>
                <button class="big"><svg><use href="#b-geom"/></svg>创建几何体</button>
                <button class="big"><svg><use href="#b-op"/></svg>创建工序</button>
                <div class="stack2">
                    <button title="创建程序"><svg class="ic"><use href="#i-newgrp"/></svg></button>
                    <button title="创建方法"><svg class="ic"><use href="#i-newmeth"/></svg></button>
                </div>
            </div>
            <div class="group-foot"><span>插入</span><i class="arrow"></i></div>
        </section>
        <section class="group g-action">
            <div class="group-body">
                <button class="big"><svg><use href="#b-prop"/></svg>属性<i class="arrow"></i></button>
            </div>
            <div class="group-foot"><span>操...</span><i class="arrow"></i></div>
        </section>
        <section class="group g-op">
            <div class="group-body">
                <button class="big"><svg><use href="#b-gen"/></svg>生成刀轨</button>
                <button class="big"><svg><use href="#b-verify"/></svg>确认刀轨</button>
                <button class="big"><svg><use href="#b-sim"/></svg>机床仿真</button>
                <button class="big"><svg><use href="#b-post"/></svg>后处理</button>
                <button class="big"><svg><use href="#b-doc"/></svg>车间文档</button>
                <button class="big more"><span class="box"><svg class="ic"><use href="#i-opdark"/></svg></span>更多<i class="arrow"></i></button>
            </div>
            <div class="group-foot"><span>工序</span><i class="arrow"></i></div>
        </section>
        <section class="group g-show">
            <div class="group-body">
                <div class="grid-show">
                    <div><button title="刀轨"><svg class="ic"><use href="#i-path"/></svg></button><i class="arrow"></i></div>
                    <div><button title="颜色"><svg class="ic"><use href="#i-color"/></svg></button><i class="arrow"></i></div>
                    <div><button class="on" title="切削"><svg class="ic"><use href="#i-hatch"/></svg></button></div>
                    <div><button title="圆心"><svg class="ic"><use href="#i-circ"/></svg></button></div>
                    <div><button class="on" title="移动"><svg class="ic"><use href="#i-hatchr"/></svg></button></div>
                    <div><button title="样条"><svg class="ic"><use href="#i-spline"/></svg></button></div>
                </div>
            </div>
            <div class="group-foot"><span>显示</span><i class="arrow"></i></div>
        </section>
        <section class="group g-work">
            <div class="group-body">
                <div class="grid-work">
                    <button title="工件 1"><svg class="ic"><use href="#i-wp"/></svg></button>
                    <button title="工件 2"><svg class="ic"><use href="#i-wpb"/></svg></button>
                    <button title="工件 3"><svg class="ic"><use href="#i-wp"/></svg></button>
                    <button title="工件 4"><svg class="ic"><use href="#i-wpb"/></svg></button>
                    <button title="工件 5"><svg class="ic"><use href="#i-wp"/></svg></button>
                    <button title="工件 6"><svg class="ic"><use href="#i-wpb"/></svg></button>
                </div>
                <button class="big"><svg><use href="#b-ipw"/></svg>显示 3D IPW<i class="arrow"></i></button>
            </div>
            <div class="group-foot"><span>工件</span><i class="arrow"></i></div>
        </section>
        <section class="group g-ana">
            <div class="group-body">
                <button class="big"><svg><use href="#b-draft"/></svg>拔模分析<i class="arrow"></i></button>
            </div>
            <div class="group-foot"><span>分析</span><i class="arrow"></i></div>
        </section>
        <section class="group g-geo">
            <div class="group-body">
                <button class="big"><svg><use href="#b-point"/></svg>点<i class="arrow"></i></button>
                <button class="big"><svg><use href="#b-extract"/></svg>抽取几何特征<i class="arrow"></i></button>
            </div>
            <div class="group-foot"><span>几何体</span><i class="arrow"></i></div>
        </section>
        <section class="group g-gc">
            <div class="group-body">
                <div class="rows2">
                    <div>
                        <button title="检查"><svg class="ic"><use href="#i-tcheck"/></svg></button>
                        <button title="刀具单"><svg class="ic"><use href="#i-tdoc"/></svg></button>
                        <button title="刀具库"><svg class="ic"><use href="#i-tdoc"/></svg></button>
                        <button title="刀具表"><svg class="ic"><use href="#i-tgrid"/></svg></button>
                        <i class="sep"></i>
                        <button title="标记"><svg class="ic"><use href="#i-flag"/></svg></button>
                    </div>
                    <div>
                        <button title="模板"><svg class="ic"><use href="#i-stack"/></svg></button>
                        <button title="文档"><svg class="ic"><use href="#i-page"/></svg></button>
                        <i class="sep"></i>
                        <button title="列表"><svg class="ic"><use href="#i-mlist"/></svg></button>
                        <button title="编辑"><svg class="ic"><use href="#i-mwr"/></svg></button>
                        <button title="时间"><svg class="ic"><use href="#i-mclk"/></svg></button>
                        <button title="机床"><svg class="ic"><use href="#i-mach"/></svg></button>
                    </div>
                </div>
            </div>
            <div class="group-foot"><span>加工工具 - GC...</span><i class="arrow"></i></div>
        </section>
        <section class="group g-sync">
            <div class="group-body">
                <button class="big"><svg><use href="#b-move"/></svg>移动面</button>
                <div class="list3">
                    <button><svg class="ic"><use href="#i-face"/></svg>偏置区域</button>
                    <button><svg class="ic"><use href="#i-face"/></svg>替换面</button>
                    <button><svg class="ic"><use href="#i-facex"/></svg>删除面</button>
                </div>
                <button class="big more"><span class="box"><svg class="ic"><use href="#i-cycle"/></svg></span>更多<i class="arrow"></i></button>
            </div>
            <div class="group-foot"><span>同步建模</span><i class="arrow"></i></div>
        </section>
        <section class="group g-feat">
            <div class="group-body">
                <div class="list2">
                    <button><svg><use href="#s-find"/></svg>查找特征</button>
                    <button><svg><use href="#s-make"/></svg>创建特征工艺</button>
                </div>
                <button class="big more"><span class="box"><svg class="ic"><use href="#i-slot"/></svg></span>更多<i class="arrow"></i></button>
            </div>
            <div class="group-foot"><span>特征</span><i class="arrow"></i></div>
        </section>
        <section class="group g-rest">
            <div class="group-body"></div>
            <div class="group-foot"><span></span><i class="arrow"></i></div>
        </section>
    </div>

    <div class="toolbar">
        <button class="menu-btn"><svg class="ic"><use href="#i-menu"/></svg>菜单(<u>M</u>)</button>
        <i class="arrow"></i>
        <i class="sep"></i>
        <button class="tb on" title="程序顺序视图"><svg class="ic"><use href="#i-vtree"/></svg></button>
        <button class="tb" title="机床视图"><svg class="ic"><use href="#i-vtool"/></svg></button>
        <button class="tb" title="几何视图"><svg class="ic"><use href="#i-vgeo"/></svg></button>
        <button class="tb" title="加工方法视图"><svg class="ic"><use href="#i-vmeth"/></svg></button>
        <i class="sep"></i>
        <button class="tb on" title="刀轨"><svg class="ic"><use href="#i-wave"/></svg></button>
        <button class="tb" title="IPW"><svg class="ic"><use href="#i-blob"/></svg></button>
        <i class="sep"></i>
        <div class="select"><select aria-label="选择过滤器"><option>无选择过滤器</option></select></div>
        <div class="select wide"><select aria-label="选择范围"><option>整个装配</option></select></div>
        <button class="tb" title="装配"><svg class="ic"><use href="#i-asm"/></svg></button>
        <button class="tb" title="过滤"><svg class="ic"><use href="#i-funnelg"/></svg></button>
        <button class="tb" title="捕捉过滤"><svg class="ic"><use href="#i-redf"/></svg></button>
        <i class="arrow"></i>
        <button class="tb" title="重置"><svg class="ic"><use href="#i-undot"/></svg></button>
        <button class="tb" title="链"><svg class="ic"><use href="#i-chain"/></svg></button>
        <button class="tb" title="点"><svg class="ic"><use href="#i-hexp"/></svg></button>
        <button class="tb" title="矩形"><svg class="ic"><use href="#i-rectp"/></svg></button>
        <i class="arrow"></i>
        <button class="tb" title="面"><svg class="ic"><use href="#i-shell"/></svg></button>
        <button class="tb" title="体"><svg class="ic"><use href="#i-bcube"/></svg></button>
        <i class="sep"></i>
        <button class="tb" title="缩放"><svg class="ic"><use href="#i-zoomw"/></svg></button>
        <button class="tb" title="平移"><svg class="ic"><use href="#i-pan"/></svg></button>
        <button class="tb" title="旋转"><svg class="ic"><use href="#i-rot"/></svg></button>
        <button class="tb" title="适合窗口"><svg class="ic"><use href="#i-fit"/></svg></button>
        <i class="arrow"></i>
        <button class="tb" title="定向"><svg class="ic"><use href="#i-corner"/></svg></button>
        <i class="arrow"></i>
        <button class="tb" title="着色"><svg class="ic"><use href="#i-shade"/></svg></button>
        <i class="arrow"></i>
        <button class="tb" title="剖切"><svg class="ic"><use href="#i-clip"/></svg></button>
        <i class="arrow"></i>
        <i class="sep"></i>
        <i class="arrow last"></i>
    </div>

    <main>
        <aside class="resbar">
            <button class="gear" title="设置"><svg><use href="#r-gear"/></svg></button>
            <button title="装配导航器"><svg><use href="#r-asm"/></svg></button>
            <button title="约束导航器"><svg><use href="#r-cons"/></svg></button>
            <button title="部件导航器"><svg><use href="#r-part"/></svg></button>
            <button class="active" title="工序导航器"><svg><use href="#r-op"/></svg></button>
            <button title="加工特征"><svg><use href="#r-mt"/></svg></button>
            <button title="机床导航器"><svg><use href="#r-mach"/></svg></button>
            <button class="wide" title="重用库"><svg><use href="#r-lib"/></svg></button>
            <button class="wide" title="HD3D"><svg><use href="#r-info"/></svg></button>
            <button class="wide" title="浏览器"><svg><use href="#r-web"/></svg></button>
            <button title="历史"><svg><use href="#r-clock"/></svg></button>
            <button title="材料"><svg><use href="#r-hue"/></svg></button>
            <button title="加工向导"><svg><use href="#r-wand"/></svg></button>
            <button title="角色"><svg><use href="#r-role"/></svg></button>
            <button title="系统场景"><svg><use href="#r-b1"/></svg></button>
            <button title="模板"><svg><use href="#r-b2"/></svg></button>
            <button title="列表"><svg><use href="#r-b3"/></svg></button>
        </aside>

        <div class="navigator">
            <div class="nav-title"><h2>工序导航器 - 程序顺序</h2><button class="maxi" title="最大化"></button></div>
            <div class="tree-wrap">
                <table class="tree">
                    <colgroup><col class="c-name"><col class="c-chg"><col><col><col><col><col><col><col class="c-end"></colgroup>
                    <thead>
                        <tr><th>名称</th><th>换刀</th><th>刀轨</th><th>刀具</th><th>刀具号</th><th>时间</th><th>几何体</th><th>方法</th><th></th></tr>
                    </thead>
                    <tbody>
                        <tr><td><div class="n">NC_PROGRAM</div></td><td></td><td></td><td></td><td></td><td>00:08:24</td><td></td><td></td><td></td></tr>
                        <tr><td><div class="n l1"><i class="tw top"></i><svg class="fold"><use href="#i-fold"/></svg><span class="cn">未用项</span></div></td><td></td><td></td><td></td><td></td><td>00:00:00</td><td></td><td></td><td></td></tr>
                        <tr><td><div class="n l1"><i class="pm"></i><svg class="ex"><use href="#i-excl"/></svg><svg class="fold"><use href="#i-fold"/></svg>PROGRAM</div></td><td></td><td></td><td></td><td></td><td>00:08:24</td><td></td><td></td><td></td></tr>
                        <tr><td><div class="n l2"><i class="pm"></i><svg class="ex"><use href="#i-excl"/></svg><svg class="fold"><use href="#i-fold"/></svg>PROGRAM_1</div></td><td></td><td></td><td></td><td></td><td>00:01:58</td><td></td><td></td><td></td></tr>
                        <tr class="purple"><td><div class="n l3"><i class="tw pass"></i><i class="tw end"></i><svg class="ex"><use href="#i-excl"/></svg><svg class="ic"><use href="#i-peck"/></svg><span class="op">PECK_DRIL...</span></div></td><td><svg class="cell"><use href="#i-drill"/></svg></td><td><svg class="tick"><use href="#i-tick"/></svg></td><td>ZT</td><td>9</td><td>00:01:46</td><td>MCS_MILL</td><td>METHOD</td><td></td></tr>
                        <tr><td><div class="n l2"><i class="pm"></i><svg class="ex"><use href="#i-excl"/></svg><svg class="fold"><use href="#i-fold"/></svg>PROGRAM_2</div></td><td></td><td></td><td></td><td></td><td>00:06:26</td><td></td><td></td><td></td></tr>
                        <tr class="sel"><td><div class="n l3"><i class="tw pass"></i><i class="tw end"></i><svg class="ex"><use href="#i-excl"/></svg><svg class="ic"><use href="#i-hole"/></svg><span class="op">HOLE_MIL...</span></div></td><td><svg class="cell"><use href="#i-emill"/></svg></td><td><svg class="tick"><use href="#i-tick"/></svg></td><td>8</td><td>2</td><td>00:06:14</td><td>MCS_MILL</td><td>METHOD</td><td></td></tr>
                        <tr><td><div class="n l2"><i class="tw mid"></i><svg class="tick"><use href="#i-tick"/></svg><svg class="fold"><use href="#i-fold"/></svg>PROGRAM_3</div></td><td></td><td></td><td></td><td></td><td>00:00:00</td><td></td><td></td><td></td></tr>
                        <tr><td><div class="n l2"><i class="tw mid"></i><svg class="tick"><use href="#i-tick"/></svg><svg class="fold"><use href="#i-fold"/></svg>PROGRAM_4</div></td><td></td><td></td><td></td><td></td><td>00:00:00</td><td></td><td></td><td></td></tr>
                        <tr><td><div class="n l2"><i class="tw mid"></i><svg class="tick"><use href="#i-tick"/></svg><svg class="fold"><use href="#i-fold"/></svg>PROGRAM_5</div></td><td></td><td></td><td></td><td></td><td>00:00:00</td><td></td><td></td><td></td></tr>
                        <tr><td><div class="n l2"><i class="tw end"></i><svg class="tick"><use href="#i-tick"/></svg><svg class="fold"><use href="#i-fold"/></svg>PROGRAM_6</div></td><td></td><td></td><td></td><td></td><td>00:00:00</td><td></td><td></td><td></td></tr>
                        <tr><td></td><td></td><td></td><td></td><td></td><td></td><td></td><td></td><td></td></tr>
                        <tr><td></td><td></td><td></td><td></td><td></td><td></td><td></td><td></td><td></td></tr>
                        <tr><td></td><td></td><td></td><td></td><td></td><td></td><td></td><td></td><td></td></tr>
                        <tr><td></td><td></td><td></td><td></td><td></td><td></td><td></td><td></td><td></td></tr>
                        <tr><td></td><td></td><td></td><td></td><td></td><td></td><td></td><td></td><td></td></tr>
                        <tr><td></td><td></td><td></td><td></td><td></td><td></td><td></td><td></td><td></td></tr>
                    </tbody>
                </table>
                <p class="note">如图。快速定位时，不是连贯的，而是很多个坐标，怎么设置能让刀路只有一个</p>
            </div>
            <div class="splitter"></div>
            <button class="fold-head">相依性<svg viewBox="0 0 20 14"><path d="M0 0h5l5 8 5-8h5l-9 14h-2z"/></svg></button>
            <section class="details">
                <button class="fold-head">细节<svg viewBox="0 0 20 14"><path d="M0 14h5l5-8 5 8h5L11 0H9z"/></svg></button>
                <div class="detail-row">
                    <div class="param-wrap">
                        <table class="params">
                            <colgroup><col><col><col><col class="c-rest"></colgroup>
                            <thead><tr><th>参数</th><th>继承自</th><th>值</th><th></th></tr></thead>
                            <tbody>
                                <tr><td><label><input type="checkbox" checked>定制项...</label></td><td>默认值</td><td class="v">0</td><td></td></tr>
                                <tr><td><label><input type="checkbox">自动进...</label></td><td></td><td class="v">0.000000</td><td></td></tr>
                                <tr><td><label><input type="checkbox">切削速度</label></td><td></td><td class="v">800.000...</td><td></td></tr>
                                <tr><td><label><input type="checkbox">模板子...</label></td><td></td><td class="v">HOLE_MI...</td><td></td></tr>
                            </tbody>
                        </table>
                        <div class="scroll">
                            <svg viewBox="0 0 12 10"><path d="M1 8l5-5 5 5" /></svg>
                            <i class="thumb"></i>
                            <svg viewBox="0 0 12 10"><path d="M1 2l5 5 5-5"/></svg>
                        </div>
                    </div>
                    <button class="apply" title="应用"><svg viewBox="0 0 22 18"><path d="M1 9l3-3 4 4 10-9 3 3-13 13z" fill="#a3c4a2" stroke="#8aa88a"/></svg></button>
                </div>
            </section>
        </div>

        <div class="viewport">
            <svg viewBox="958 226 962 766" preserveAspectRatio="xMinYMin slice">
                <defs>
                    <linearGradient id="cyl" gradientUnits="userSpaceOnUse" x1="1180" y1="715" x2="1232" y2="1010">
                        <stop offset="0" stop-color="#ffa500"/><stop offset=".08" stop-color="#ffbe00"/><stop offset=".28" stop-color="#ffcf06"/><stop offset=".47" stop-color="#fffb38"/><stop offset=".55" stop-color="#fff62e"/><stop offset=".78" stop-color="#ff9d00"/><stop offset="1" stop-color="#b86f00"/>
                    </linearGradient>
                    <linearGradient id="rim" gradientUnits="userSpaceOnUse" x1="1400" y1="575" x2="1480" y2="1035">
                        <stop offset="0" stop-color="#ffb000"/><stop offset=".2" stop-color="#ffc800"/><stop offset=".38" stop-color="#ffdf14"/><stop offset=".47" stop-color="#fffb3a"/><stop offset=".55" stop-color="#ffe820"/><stop offset=".7" stop-color="#ffa000"/><stop offset="1" stop-color="#c47500"/>
                    </linearGradient>
                    <linearGradient id="bore" gradientUnits="userSpaceOnUse" x1="1035" y1="812" x2="1058" y2="992">
                        <stop offset="0" stop-color="#5e3900"/><stop offset=".15" stop-color="#6e4300"/><stop offset=".6" stop-color="#ff9d00"/><stop offset=".95" stop-color="#fff835"/>
                    </linearGradient>
                    <linearGradient id="hole"><stop offset="0" stop-color="#b46d00"/><stop offset=".35" stop-color="#6b4200"/><stop offset=".6" stop-color="#6b4200"/><stop offset="1" stop-color="#c37600"/></linearGradient>
                    <linearGradient id="side" x2="0" y2="1"><stop offset="0" stop-color="#744600"/><stop offset=".5" stop-color="#9a5e00"/><stop offset="1" stop-color="#ffa800"/></linearGradient>
                </defs>
                <!-- flange -->
                <path d="M1305 585L1388 570C1445 562 1502 660 1534 753C1558 830 1569 920 1569 992H1400L1300 800z" fill="url(#rim)" stroke="#333"/>
                <path d="M1231 707C1240 640 1268 585 1305 585C1360 585 1402 660 1440 767C1464 850 1477 920 1479 992H1231z" fill="#b06900" stroke="#333"/>
                <!-- sleeve -->
                <path d="M1015 749L1321 694C1365 690 1399 770 1419 843C1432 895 1435 950 1433 992H1015z" fill="url(#cyl)" stroke="#333"/>
                <path d="M1015 749C1030 748 1040 754 1046 759L1045 785L1066 808L1067 782C1105 845 1128 930 1130 992H985C970 930 962 840 982 787C990 765 1002 751 1015 749z" fill="#b06900" stroke="#333"/>
                <path d="M1045 785L1067 782L1066 808z" fill="#ffcb08" stroke="#333"/>
                <path d="M1046 759L1103 749C1122 747 1134 752 1134 760C1134 767 1126 771 1117 772L1045 785z" fill="#b06900" stroke="#333"/>
                <path d="M1097 750C1122 746 1134 752 1134 760C1134 767 1126 771 1117 772L1097 776z" fill="url(#hole)" stroke="#333"/>
                <path d="M1030 812C1008 812 996 850 996 893C996 930 1002 965 1010 992H1106C1106 950 1092 890 1074 853C1060 825 1045 812 1030 812z" fill="url(#bore)" stroke="#333"/>
                <ellipse cx="1080" cy="996" rx="29" ry="35" fill="#6e4300" stroke="#333"/>
                <path d="M1104 960C1106 970 1106 980 1106 992H1130C1129 980 1127 960 1124 946L1101 946z" fill="#b06900"/>
                <!-- cross holes -->
                <path d="M1176 741C1178 732 1195 727 1214 726C1236 724 1251 732 1251 742C1251 753 1234 761 1218 761C1198 760 1176 750 1176 741z" fill="url(#hole)" stroke="#333"/>
                <path d="M1201 759V723C1204 716 1222 716 1226 722L1225 760z" fill="#0ff"/>
                <path d="M1204 724c4-5 8-3 10-1" fill="none" stroke="#e8d43c" stroke-width="2"/>
                <ellipse cx="1330" cy="937" rx="34.500" ry="37.500" fill="url(#side)" stroke="#333"/>
                <path d="M1329 900C1344 918 1345 950 1306 966C1290 950 1292 910 1329 900z" fill="#ffe92c" stroke="#333"/>
                <path d="M1302 917L1338 928C1346 930 1349 934 1348 940L1344 949C1342 953 1336 953 1332 951L1296 938C1297 930 1299 922 1302 917z" fill="#0ff"/>
                <path d="M1328 942l4-6 6 5" fill="none" stroke="#eab838" stroke-width="2"/>
                <path d="M1074 992l4-6h12l5 6z" fill="#0ff"/>
                <!-- tool path -->
                <g fill="none" stroke="#00f" stroke-width="2" stroke-dasharray="8 8">
                    <path d="M958 548L1062 740"/><path d="M1228 333L1215 717" stroke-dasharray="9 7"/><path d="M1336 940L1481 991"/>
                </g>
                <path d="M1214 717v8" stroke="#00f" stroke-width="2"/>
                <path d="M960 364C1010 285 1060 265 1100 269C1150 272 1190 298 1228 333C1290 395 1350 495 1384 567C1440 700 1490 860 1509 987" fill="none" stroke="#f01414" stroke-width="2" stroke-dasharray="8 7"/>
                <!-- MCS triad -->
                <path d="M1051 946L1101 937" stroke="#c22418" stroke-width="2"/><path d="M1101 937L1128 932" stroke="#d9988c" stroke-width="2"/><path d="M1126 928l20 1-19 7z" fill="#e3a99e"/>
                <path d="M1051 946L1049 992" stroke="#1633c8" stroke-width="2"/>
                <path d="M1051 946L1086 982" stroke="#1e8a2b" stroke-width="2"/><path d="M1090 978l3 12-12-7z" fill="#1e9a2f"/>
                <text x="1129" y="924" class="axis">XM</text>
            </svg>
        </div>
        <!-- hand-drawn arrow over the navigator and the view -->
        <svg class="callout" viewBox="0 0 372 204"><path d="M3 50H186V3L368 101L186 198V149H3z" fill="none" stroke="#22b14c" stroke-width="5" stroke-linejoin="round"/></svg>
    </main>

    <div class="status">全部 1</div>

    <footer class="taskbar">
        <button class="start" title="开始"><svg viewBox="0 0 24 24"><path d="M0 3l10-1v9H0zM11 2l13-2v11H11zM0 12h10v10L0 21zM11 12h13v12l-13-2z" fill="#fff"/></svg></button>
        <label class="cortana">
            <svg class="ring" viewBox="0 0 34 34"><circle cx="17" cy="17" r="14" fill="none" stroke="#fff" stroke-width="4"/><circle cx="17" cy="17" r="16" fill="none" stroke="#999" stroke-width="1.500"/></svg>
            <input type="text" placeholder="有问题尽管问我" aria-label="搜索">
            <svg class="mic" viewBox="0 0 18 26"><rect x="4" y="1" width="10" height="17" rx="2" fill="none" stroke="#999" stroke-width="2"/><path d="M1 12v6l3 4h10l3-4v-6M9 22v3M5 25h8" fill="none" stroke="#999" stroke-width="1.500"/></svg>
        </label>
        <button class="taskview" title="任务视图"><svg viewBox="0 0 32 22"><path d="M7 1h18v19H7zM4 4H1v13h3M28 4h3v13h-3" fill="none" stroke="#fff" stroke-width="1.500"/></svg></button>
        <div class="apps">
            <button class="run" title="Edge"><svg viewBox="0 0 36 36"><path d="M3 16C5 7 11 2 18 2c10 0 15 7 15 18H12c0 5 4 8 10 8 4 0 7-1 9-2v7c-3 2-7 3-11 3C11 35 5 29 5 21c0-4 3-8 7-10-3 0-7 2-9 5zm9-2h12c0-4-2-6-5-6-4 0-6 2-7 6z" fill="#0a79d8"/></svg></button>
            <button title="画图"><svg viewBox="0 0 36 36"><path d="M2 22C2 12 12 5 21 5c9 0 12 6 12 11 0 8-5 17-14 17-4 0-1-7-6-7s-11 5-11-4z" fill="#cfe2ef" stroke="#8eb0c6"/><circle cx="8" cy="20" r="3" fill="#e05a3a"/><circle cx="13" cy="13" r="3" fill="#5cb443"/><circle cx="20" cy="10" r="3" fill="#f3b52f"/><circle cx="15" cy="22" r="2" fill="#111"/><path d="M19 35l8-24" stroke="#e08a2a" stroke-width="3"/><path d="M25 11l3-7 7-3-2 7-4 4z" fill="#caa46a"/></svg></button>
            <button class="run multi" title="资源管理器"><svg viewBox="0 0 36 36"><path d="M2 5h13l3 3h16v24H2z" fill="#ffe38c"/><path d="M2 5h13v4H2z" fill="#ffca28"/><path d="M7 20h22v13h-5v-8H12v8H7z" fill="#2fa5e6"/></svg></button>
            <button title="聚"><span class="ju">聚</span></button>
            <button title="浏览器"><svg viewBox="0 0 36 36"><circle cx="18" cy="18" r="16.500" fill="#e7ecf8"/><path d="M5 9C11 1 22 0 29 7" stroke="#6fd4c4" stroke-width="3" fill="none"/><path d="M8 7c-1 7 2 8 8 8l2-1 11 5-13 12-1-7C6 23 3 15 8 7z" fill="#1c66e8"/></svg></button>
            <button class="run current" title="NX 10"><svg viewBox="0 0 36 36"><circle cx="19" cy="20" r="14" fill="#1aa7d9"/><path d="M22 7c8 1 11 8 10 15-3 5-9 4-9-1s-3-8-1-14z" fill="#2e9b4a"/><path d="M3 1l17 1-5 19z" fill="#d5203a"/><path d="M30 9c8 4 2 13-5 17-7 5-14 7-19 5" fill="none" stroke="#f2a92a" stroke-width="3"/><path d="M0 32l8-5v8z" fill="#f2a92a"/></svg></button>
            <button class="bird" title="助手"><svg viewBox="0 0 36 36"><rect width="36" height="36" rx="5" fill="#2796ee"/><path d="M3 10l13 5c2-6 8-9 12-10l-3 9c4 2 5 4 5 7l-7 1c1 4 2 8 0 12-5-3-11-6-12-13-3-2-6-4-8-11z" fill="#f2f8ff"/></svg></button>
        </div>
        <div class="tray">
            <svg class="t-up" viewBox="0 0 20 12"><path d="M1 11l9-9 9 9" fill="none" stroke="#fff" stroke-width="1.500"/></svg>
            <svg class="t-24" viewBox="0 0 24 20"><path d="M1 7h4l5-5v16l-5-5H1zM13 7c2 2 2 4 0 6M16 4c4 4 4 8 0 12M19 2c5 5 5 11 0 16" fill="none" stroke="#fff" stroke-width="1.300"/></svg>
            <svg class="t-24" viewBox="0 0 24 24"><circle cx="12" cy="12" r="11" fill="#c5141b" stroke="#eee" stroke-width="1.500"/><path d="M12 4v8l5 3" stroke="#fff" fill="none" stroke-width="2"/><path d="M12 0h12v13H12z" fill="#4794cf"/><path d="M18 3v5M18 9v2" stroke="#fff" stroke-width="2"/></svg>
            <svg class="t-24" viewBox="0 0 24 18"><path d="M7 5h15v10H7zM22 8h2v4h-2" fill="none" stroke="#fff" stroke-width="1.500"/><path d="M9 7h12v7H9zM0 4h7v4L5 10H2L0 8zM2 0v4M5 0v4M4 10v6h4" fill="#fff" stroke="#fff"/></svg>
            <svg class="t-24" viewBox="0 0 24 20"><path d="M3 19C4 9 11 2 23 1M8 19c1-7 6-12 14-13M13 19c0-4 4-8 9-8" fill="none" stroke="#bbb" stroke-width="1.500"/><circle cx="20" cy="17" r="2" fill="#fff"/></svg>
            <span class="ime">英</span>
            <svg class="t-24" viewBox="0 0 24 24"><path d="M2 4l18-3 3 18-18 4z" fill="#f0532a"/><path d="M17 7c-4-2-9-1-9 2s9 2 9 5-6 4-10 2" stroke="#fff" stroke-width="3" fill="none"/></svg>
            <div class="clock"><span>15:10</span><span>2017/1/3</span></div>
            <div class="notice"><svg viewBox="0 0 24 22"><path d="M0 0h24v16H10l-4 5v-5H0z" fill="#fff"/><path d="M4 5h15M4 9h15M4 12h9" stroke="#222"/></svg><b>1</b></div>
        </div>
    </footer>

    <!-- input method bar floating above the desktop -->
    <div class="sogou">
        <svg class="slogo" viewBox="0 0 42 42"><path d="M1 7L34 0l7 34-35 8z" fill="#f2562a"/><path d="M31 11c-9-3-20-2-20 4s20 3 20 9-13 7-22 4" stroke="#fff" stroke-width="6" fill="none"/></svg>
        <span>英</span>
        <svg viewBox="0 0 22 22"><path d="M12 2a9 9 0 1 0 9 12c-6 2-11-4-9-12z" fill="#df6c0a"/></svg>
        <svg viewBox="0 0 22 22"><circle cx="6" cy="5" r="3" fill="#df6c0a"/><path d="M14 11c5 0 5 5 0 8 2-3 0-4 0-8z" fill="#df6c0a"/></svg>
        <svg viewBox="0 0 22 22"><rect x="7" y="0" width="9" height="14" rx="4.500" fill="#df6c0a"/><path d="M3 9c0 11 17 11 17 0M11 17v5M6 21h11" stroke="#df6c0a" stroke-width="2" fill="none"/></svg>
        <svg class="kb" viewBox="0 0 26 20"><rect x="1" y="1" width="23" height="17" rx="2" fill="none" stroke="#df6c0a" stroke-width="2"/><path d="M4 6h18M4 10h18" stroke="#df6c0a" stroke-width="2.500" stroke-dasharray="3 1.500"/><path d="M7 14h12" stroke="#df6c0a" stroke-width="2"/></svg>
        <svg viewBox="0 0 22 22"><circle cx="10" cy="6" r="5" fill="#b9c4de"/><path d="M1 20c0-12 18-12 18 0z" fill="#b9c4de"/></svg>
        <svg viewBox="0 0 22 22"><path d="M7 1c2 3 6 3 8 0l7 4-3 6-3-1v11H6V10l-3 1-3-6z" fill="#df6c0a"/></svg>
        <span>全</span>
        <span>简</span>
        <svg viewBox="0 0 22 22"><path d="M2 20L12 11" stroke="#df6c0a" stroke-width="5"/><path d="M10 10c-1-6 4-9 8-8l-3 4 2 3 4-2c0 6-5 8-9 6z" fill="#df6c0a"/></svg>
    </div>
    <div class="brand">
        <svg viewBox="0 0 86 98"><path d="M43 1l41 24v48L43 97 2 73V25z" fill="#1a6f96" stroke="#c9d3da" stroke-width="2"/><path d="M43 1L2 25v20C10 28 34 12 65 32 63 20 56 9 43 1z" fill="#6c9fdb"/><path d="M43 1l41 24v22c0 8-10 14-20 16V36C63 20 56 9 43 1z" fill="#63c0ee"/><path d="M2 25v48l31 18C22 80 21 72 22 64V36C12 40 6 46 2 56z" fill="#1c4a86"/><path d="M2 56C6 38 30 14 65 32M22 36v28c0 12 5 20 13 28M84 47C80 60 60 72 22 64" fill="none" stroke="#c9d3da"/><path d="M22 37l21-13 21 13v24L43 74 22 61z" fill="#164a80" stroke="#d9dde0" stroke-width="4"/><path d="M24 38l19-12 19 12-19 11z" fill="#7aa9de" stroke="#ccd6de"/><path d="M43 49l19-11v22L43 72z" fill="#2a87a8"/></svg>
        <div><b>3D世界网</b><small>WWW.3DSJW.COM</small></div>
    </div>
</body>
</html>
```
FILE: styles.css
```css
* {
    box-sizing: border-box;
}
body {
    margin: 0;
    height: 100vh;
    overflow: hidden;
    display: flex;
    flex-direction: column;
    background-color: #fff;
    color: #222;
    font-family: "Open Sans", "Noto Sans CJK SC", sans-serif;
    font-size: 17px;
    line-height: 22px;
}
button {
    border: 0;
    padding: 0;
    margin: 0;
    background: none;
    color: inherit;
    font: inherit;
    white-space: nowrap;
}
h1, h2 {
    margin: 0;
    font-weight: normal;
}
svg {
    display: block;
    flex: none;
}
.sprites {
    position: absolute;
    width: 0;
    height: 0;
}
.ic {
    width: 16px;
    height: 16px;
}
.sep {
    flex: none;
    width: 1px;
    height: 30px;
    background-color: #d4d4d4;
}
.arrow {
    flex: none;
    width: 6px;
    height: 4px;
    background-color: #222;
    clip-path: polygon(0 0, 100% 0, 50% 100%);
}
.on {
    background-color: #c8d8d6;
    outline: 1px solid #a3bcb7;
    outline-offset: -1px;
}

/* title bar */
.titlebar {
    position: relative;
    flex: none;
    height: 34px;
    display: flex;
    align-items: center;
}
.nx-logo {
    width: 49px;
    padding-left: 3px;
    font-family: "Liberation Sans", sans-serif;
    font-weight: bold;
    font-size: 27px;
    color: #8a9caa;
}
.qa {
    display: flex;
    align-items: center;
    width: 24px;
    padding-left: 7px;
}
.titlebar .qa.save {
    width: 30px;
    padding-left: 9px;
}
.titlebar .arrow {
    margin: 0 7px;
}
.titlebar .window-btn {
    width: auto;
    padding-left: 9px;
    gap: 4px;
}
.titlebar .arrow.bar {
    margin: 0 3px;
    height: 6px;
    clip-path: polygon(0 0, 100% 0, 100% 20%, 0 20%, 0 45%, 100% 45%, 50% 100%, 0 45%);
}
.titlebar h1 {
    flex: 1;
    padding-left: 504px;
    font-family: "Noto Sans", "Noto Sans CJK SC", sans-serif;
    font-size: 18px;
    text-spacing-trim: space-all;
    white-space: nowrap;
    color: #000;
}
.siemens {
    font-weight: bold;
    font-size: 17px;
    color: #009999;
    margin-right: 37px;
}
.winbtns {
    display: flex;
    gap: 18px;
    color: #444;
    padding-right: 11px;
}
.winbtns.heavy {
    gap: 16px;
    color: #111;
    padding-right: 12px;
    --w: 3;
}

/* tabs */
.tabs {
    flex: none;
    height: 36px;
    display: flex;
    background-color: #c8d8d6;
    font-size: 21px;
    line-height: 36px;
}
.tabs > a {
    padding: 0 13px;
    color: #222;
    text-decoration: none;
    white-space: nowrap;
}
.tabs > a.active {
    background-color: #fff;
    color: #2a87b8;
    margin-left: 2px;
    border-top: 1px solid #8e9a99;
    line-height: 35px;
}
.file-tab {
    width: 107px;
    background-color: #5d8a84;
    color: #fff;
}
.tab-tools {
    margin-left: auto;
    display: flex;
    align-items: center;
    gap: 10px;
    font-size: 17px;
    line-height: 22px;
}
.find {
    display: flex;
    align-items: center;
    width: 188px;
    height: 26px;
    border: 1px solid #a9a9a9;
    background-color: #fff;
    padding-right: 5px;
}
.find input {
    flex: 1;
    min-width: 0;
    border: 0;
    padding: 0 1px;
    font: inherit;
    outline: none;
}
.find input::placeholder {
    color: #a5a5a5;
}
.tutorial {
    display: flex;
    align-items: center;
    gap: 4px;
}

/* ribbon */
.ribbon {
    flex: none;
    height: 117px;
    display: flex;
    border-bottom: 1px solid #cfcfcf;
    padding: 5px 0 3px;
}
.group {
    flex: none;
    display: flex;
    flex-direction: column;
    border-right: 1px solid #d4d4d4;
    white-space: nowrap;
}
.g-insert { width: 288px; padding-left: 13px; }
.g-action { width: 57px; padding-left: 12px; }
.g-op { width: 427px; padding-left: 12px; }
.g-show { width: 92px; padding-left: 9px; }
.g-work { width: 172px; padding-left: 8px; }
.g-ana { width: 91px; padding-left: 12px; }
.g-geo { width: 165px; padding-left: 14px; }
.g-gc { width: 151px; padding-left: 5px; }
.g-sync { width: 216px; padding-left: 12px; }
.g-feat { width: 199px; padding-left: 12px; }
.g-rest { flex: 1; border-right: 0; }
.group-body {
    flex: 1;
    display: flex;
    align-items: flex-start;
    gap: 9px;
}
.group-foot {
    display: flex;
    align-items: center;
    height: 18px;
    color: #2a87b8;
}
.group-foot span {
    flex: 1;
    margin-left: -12px;
    text-align: center;
}
.g-action .group-foot span {
    text-align: left;
}
.g-gc .group-foot span {
    margin-left: 0;
}
.group-foot .arrow {
    margin: 3px 9px 0;
}
.big {
    display: flex;
    flex-direction: column;
    align-items: center;
    padding-top: 1px;
}
.big > svg {
    width: 30px;
    height: 30px;
    margin-bottom: 6px;
}
.g-geo .big:first-child {
    width: 30px;
}
.big .arrow {
    margin-top: 6px;
}
.more {
    width: 38px;
    padding-top: 0;
    margin-left: 3px;
}
.more .box {
    display: flex;
    align-items: center;
    justify-content: center;
    width: 38px;
    height: 34px;
    margin-bottom: 3px;
    border: 1px solid #ececec;
    border-radius: 3px;
}
.stack2 {
    display: flex;
    flex-direction: column;
    gap: 14px;
    padding-top: 3px;
}
.grid-show {
    display: grid;
    grid-template-columns: 38px 38px;
    grid-auto-rows: 29px;
    margin-top: -4px;
}
.grid-show div {
    display: flex;
    align-items: center;
    gap: 4px;
}
.grid-show button, .grid-work button, .rows2 button, .tb {
    display: flex;
    align-items: center;
    justify-content: center;
    width: 23px;
    height: 22px;
}
.grid-work {
    display: grid;
    grid-template-columns: 25px 25px;
    grid-auto-rows: 29px;
    align-items: center;
    margin-top: -4px;
    margin-right: -5px;
}
.rows2 div {
    display: flex;
    align-items: center;
    height: 32px;
}
.rows2 {
    padding-top: 2px;
}
.rows2 .sep {
    height: 22px;
    margin: 0 2px;
}
.list3 button, .list2 button {
    display: flex;
    align-items: center;
    gap: 4px;
    height: 29px;
}
.list3 {
    margin-top: -4px;
}
.list2 {
    padding-top: 1px;
}
.list2 button {
    height: 40px;
}
.list2 svg {
    width: 24px;
    height: 24px;
}

/* selection toolbar */
.toolbar {
    flex: none;
    height: 39px;
    display: flex;
    align-items: center;
    gap: 4px;
    padding: 0 7px 0 10px;
    border-bottom: 1px solid #80898b;
}
.toolbar .sep {
    margin: 0 4px;
}
.toolbar .arrow {
    margin: 0 1px;
}
.menu-btn {
    display: flex;
    align-items: center;
    font-size: 18px;
}
.menu-btn .ic {
    margin-right: 4px;
}
.toolbar .tb {
    width: 21px;
}
.toolbar .arrow.last {
    margin-left: auto;
    margin-top: 18px;
}
.select {
    position: relative;
    width: 202px;
    margin-left: 3px;
}
.select.wide {
    width: 213px;
    margin-left: 5px;
}
.select select {
    display: block;
    width: 100%;
    height: 26px;
    padding: 0 2px;
    appearance: none;
    border: 1px solid #a9a9a9;
    border-radius: 0;
    background-color: #fff;
    color: #222;
    font: inherit;
}
.select::after {
    content: "";
    position: absolute;
    right: 10px;
    top: 11px;
    border: 4px solid transparent;
    border-top: 4px solid #222;
    border-bottom: 0;
}

/* work area */
main {
    position: relative;
    flex: 1;
    min-height: 0;
    display: flex;
}
.resbar {
    flex: none;
    width: 32px;
    display: flex;
    flex-direction: column;
    background-color: #dcdcdc;
    border-right: 1px solid #a5a5a5;
}
.resbar button {
    flex: none;
    height: 42px;
    display: flex;
    align-items: center;
    padding-left: 6px;
}
.resbar svg {
    width: 24px;
    height: 24px;
}
.resbar .gear {
    height: 26px;
    margin-bottom: 16px;
    padding-left: 3px;
}
.resbar .wide {
    margin-bottom: 12px;
}
.resbar .active {
    background-color: #fff;
    border: 1px solid #a5a5a5;
    border-right: 0;
    margin: 0 -1px 0 2px;
    padding-left: 3px;
}
.navigator {
    flex: none;
    width: 926px;
    padding: 0 9px 6px 6px;
    display: flex;
    flex-direction: column;
    border-right: 1px solid #6c6f72;
    font-size: 18px;
}
.nav-title {
    flex: none;
    height: 34px;
    display: flex;
    align-items: center;
    justify-content: space-between;
    padding: 2px 8px 0 4px;
}
.nav-title h2 {
    font-size: 18px;
}
.maxi {
    width: 16px;
    height: 15px;
    border: 1px solid #111;
    border-top-width: 3px;
}
.tree-wrap {
    position: relative;
    flex: 1;
    min-height: 0;
    overflow: hidden;
    border: 1px solid #d6d6d6;
    padding: 1px;
}
table {
    width: 100%;
    table-layout: fixed;
    border-collapse: separate;
    border-spacing: 0;
}
.tree col { width: 100px; }
.tree .c-name { width: 200px; }
.tree .c-chg { width: 101px; }
.tree .c-end { width: auto; }
th, td {
    height: 28px;
    padding: 0 4px;
    border-right: 1px solid #ebebeb;
    border-bottom: 1px solid #ebebeb;
    text-align: left;
    white-space: nowrap;
}
th {
    padding: 0 6px;
    background-color: #efefef;
    border-color: #cecece;
    font-weight: normal;
}
th:last-child, td:last-child {
    border-right: 0;
}
tbody tr:nth-child(even) td {
    background-color: #fafafa;
}
.tree td {
    font-family: "Noto Sans", "Noto Sans CJK SC", sans-serif;
    font-size: 19px;
}
.tree tbody td:first-child {
    border-right-color: #000;
    padding: 0;
}
.n {
    display: flex;
    align-items: center;
    height: 27px;
    padding-left: 3px;
}
.n .cn {
    font-size: 18px;
}
.fold {
    width: 15px;
    height: 14px;
    margin-right: 3px;
}
.ex {
    width: 8px;
    height: 16px;
    margin-right: 4px;
}
.pm {
    flex: none;
    width: 13px;
    height: 13px;
    margin-right: 7px;
    border: 1px solid #c9c9c9;
    background: #fff linear-gradient(#222, #222) center / 9px 1px no-repeat;
}
.l2 { padding-left: 22px; }
.l3 { padding-left: 41px; }
/* dotted tree connectors */
.tw {
    flex: none;
    align-self: stretch;
    width: 10px;
    margin-left: 6px;
    border-left: 1px dotted #999;
    background: repeating-linear-gradient(90deg, #999 0 1px, transparent 1px 3px) 0 13px / 100% 1px no-repeat;
}
.tw.top {
    width: 9px;
    margin-top: 13px;
    border-top: 1px dotted #999;
    background: none;
    margin-right: 1px;
}
.tw.mid {
    margin-right: 1px;
}
.tw.end {
    height: 14px;
    border-bottom: 1px dotted #999;
    background: none;
    margin-right: 5px;
    align-self: flex-start;
}
.l2 .tw.end {
    margin-right: 1px;
}
.tw.pass {
    width: 1px;
    background: none;
    margin-left: -13px;
    margin-right: 12px;
}
.tick {
    width: 13px;
    height: 12px;
    margin-right: 3px;
}
.cell {
    width: 10px;
    height: 16px;
    margin-left: 3px;
}
td > .tick {
    margin-left: 2px;
}
.op {
    flex: 1;
    height: 27px;
    line-height: 27px;
    padding-left: 2px;
}
.purple {
    color: #6a2fd0;
}
.tree .sel td:not(:first-child):not(:last-child), .sel .op {
    background-color: #3399ff;
    color: #fff;
    border-bottom: 1px dotted #d27a1e;
}
.sel td:not(:first-child):not(:last-child) {
    border-right-color: #fff;
}
.note {
    position: absolute;
    left: 374px;
    top: 340px;
    width: 206px;
    margin: 0;
    font-family: "Noto Sans CJK SC", sans-serif;
    font-weight: bold;
    font-size: 20px;
    line-height: 35px;
    color: #22b14c;
    word-break: break-all;
}
.splitter {
    flex: none;
    height: 5px;
    border: 1px solid #a9a9a9;
    background-color: #d8d8d8;
}
.fold-head {
    flex: none;
    height: 31px;
    display: flex;
    align-items: center;
    justify-content: space-between;
    width: 100%;
    padding: 2px 6px 0 7px;
    color: #2a87b8;
    font-size: 22px;
}
.fold-head svg {
    width: 19px;
    height: 14px;
    fill: #2a87b8;
}
.details {
    flex: none;
    border: 1px solid #d6d6d6;
    border-top-width: 3px;
    padding: 0 6px 7px 6px;
}
.details .fold-head {
    height: 35px;
    padding: 0 0 4px;
}
.detail-row {
    display: flex;
    align-items: flex-start;
    gap: 3px;
}
.param-wrap {
    position: relative;
    flex: 1;
    border: 1px solid #d6d6d6;
    padding: 1px;
}
.params col {
    width: 100px;
}
.params .c-rest {
    width: auto;
}
.params td:first-child {
    padding: 0 2px;
}
.params .v {
    font-family: "Noto Sans", sans-serif;
    font-size: 19px;
}
.params label {
    display: flex;
    align-items: center;
    gap: 5px;
}
.params input {
    appearance: none;
    flex: none;
    width: 12px;
    height: 12px;
    margin: 0;
    border: 1px solid #111;
}
.params input:checked {
    background: linear-gradient(135deg, #ddd 30%, #bbb 50%, #eee 70%);
}
.scroll {
    position: absolute;
    right: 1px;
    top: 29px;
    bottom: 1px;
    width: 25px;
    padding: 9px 0 8px;
    display: flex;
    flex-direction: column;
    align-items: center;
    background-color: #f0f0f0;
}
.scroll svg {
    width: 12px;
    height: 10px;
    fill: none;
    stroke: #555;
    stroke-width: 3;
}
.thumb {
    width: 100%;
    height: 26px;
    margin: 7px 0 auto;
    background-color: #cdcdcd;
}
.apply {
    width: 32px;
    height: 32px;
    border: 1px solid #cfcfcf;
    display: flex;
    align-items: center;
    justify-content: center;
}
.apply svg {
    width: 22px;
    height: 18px;
}
.viewport {
    flex: 1;
    min-width: 0;
    background: linear-gradient(#222426, #424345 50%, #5a5b5d);
}
.viewport svg {
    width: 100%;
    height: 100%;
}
.axis {
    font-size: 13px;
    fill: #c0392b;
}
.callout {
    position: absolute;
    left: 850px;
    top: 129px;
    width: 372px;
    height: 204px;
    pointer-events: none;
}
.status {
    flex: none;
    height: 28px;
    border-top: 1px solid #a9a9a9;
    padding-right: 38px;
    text-align: center;
    font-weight: bold;
    line-height: 26px;
}

/* taskbar */
.taskbar {
    flex: none;
    height: 60px;
    display: flex;
    background-color: #000;
    color: #fff;
}
.start, .taskview {
    width: 72px;
    display: flex;
    align-items: center;
    justify-content: center;
}
.start svg {
    width: 24px;
    height: 24px;
}
.taskview svg {
    width: 32px;
    height: 22px;
}
.cortana {
    width: 516px;
    display: flex;
    align-items: center;
    padding: 0 22px 0 13px;
    background-color: #333;
}
.ring {
    width: 34px;
    height: 34px;
}
.cortana input {
    flex: 1;
    padding: 0 7px;
    border: 0;
    background: none;
    font: inherit;
    font-size: 22px;
}
.cortana input::placeholder {
    color: #9a9a9a;
}
.mic {
    width: 18px;
    height: 26px;
}
.apps {
    display: flex;
    gap: 14px;
    margin-left: 10px;
}
.apps button {
    width: 61px;
    display: flex;
    align-items: center;
    justify-content: center;
    border-bottom: 3px solid transparent;
    border-top: 3px solid transparent;
}
.apps svg {
    width: 36px;
    height: 36px;
}
.apps .run {
    border-bottom-color: #e3ffa8;
}
.apps .multi {
    border-image: linear-gradient(90deg, #e3ffa8 78%, #a9bf80 78%) 0 0 3 0;
}
.apps .current {
    width: 73px;
    margin: 0 -6px;
    background-color: #333;
}
.apps .bird {
    background: linear-gradient(90deg, #2c5a25 6px, #1c1c1c 6px);
    border-bottom-color: #4be04b;
}
.ju {
    width: 36px;
    height: 36px;
    border-radius: 5px;
    background-color: #e02048;
    font-weight: bold;
    font-size: 28px;
    line-height: 34px;
}
.tray {
    margin-left: auto;
    display: flex;
    align-items: center;
    gap: 14px;
    padding-right: 38px;
}
.t-up {
    width: 20px;
    height: 12px;
}
.t-24 {
    width: 24px;
    height: 24px;
}
.ime {
    margin-right: 6px;
    font-size: 19px;
}
.clock {
    width: 110px;
    margin-right: 7px;
    display: flex;
    flex-direction: column;
    align-items: center;
    font-family: "Noto Sans", sans-serif;
    line-height: 28px;
}
.notice {
    position: relative;
}
.notice svg {
    width: 24px;
    height: 22px;
}
.notice b {
    position: absolute;
    left: 12px;
    top: 11px;
    width: 24px;
    height: 24px;
    border: 1px solid #777;
    border-radius: 50%;
    background-color: #222;
    text-align: center;
    font-size: 16px;
}

/* floating input bar and site mark */
.sogou {
    position: absolute;
    right: 1px;
    bottom: 72px;
    width: 374px;
    height: 36px;
    display: flex;
    align-items: center;
    gap: 11px;
    border: 1px solid #b5c6d8;
    border-left: 0;
    background: linear-gradient(90deg, transparent 18px, #fbfdff 18px);
    color: #df6c0a;
    font-family: "Noto Sans CJK SC", sans-serif;
    font-size: 21px;
    font-weight: bold;
}
.sogou svg {
    width: 22px;
    height: 22px;
}
.sogou .kb {
    width: 26px;
    height: 20px;
    margin: 0 -2px;
}
.sogou .slogo {
    width: 42px;
    height: 42px;
    margin-right: -5px;
}
.brand {
    position: absolute;
    right: 9px;
    bottom: 4px;
    display: flex;
    align-items: center;
    gap: 10px;
    opacity: .85;
    color: #5cb8e4;
}
.brand svg {
    width: 86px;
    height: 98px;
}
.brand div {
    display: flex;
    flex-direction: column;
    margin-bottom: 14px;
    -webkit-text-stroke: 1px #b9dcec;
    paint-order: stroke fill;
}
.brand b {
    font-family: "Noto Sans CJK SC", sans-serif;
    font-weight: 900;
    font-size: 46px;
    line-height: 46px;
}
.brand small {
    font-family: "DejaVu Sans", sans-serif;
    font-weight: bold;
    font-size: 18px;
    line-height: 22px;
}
```
